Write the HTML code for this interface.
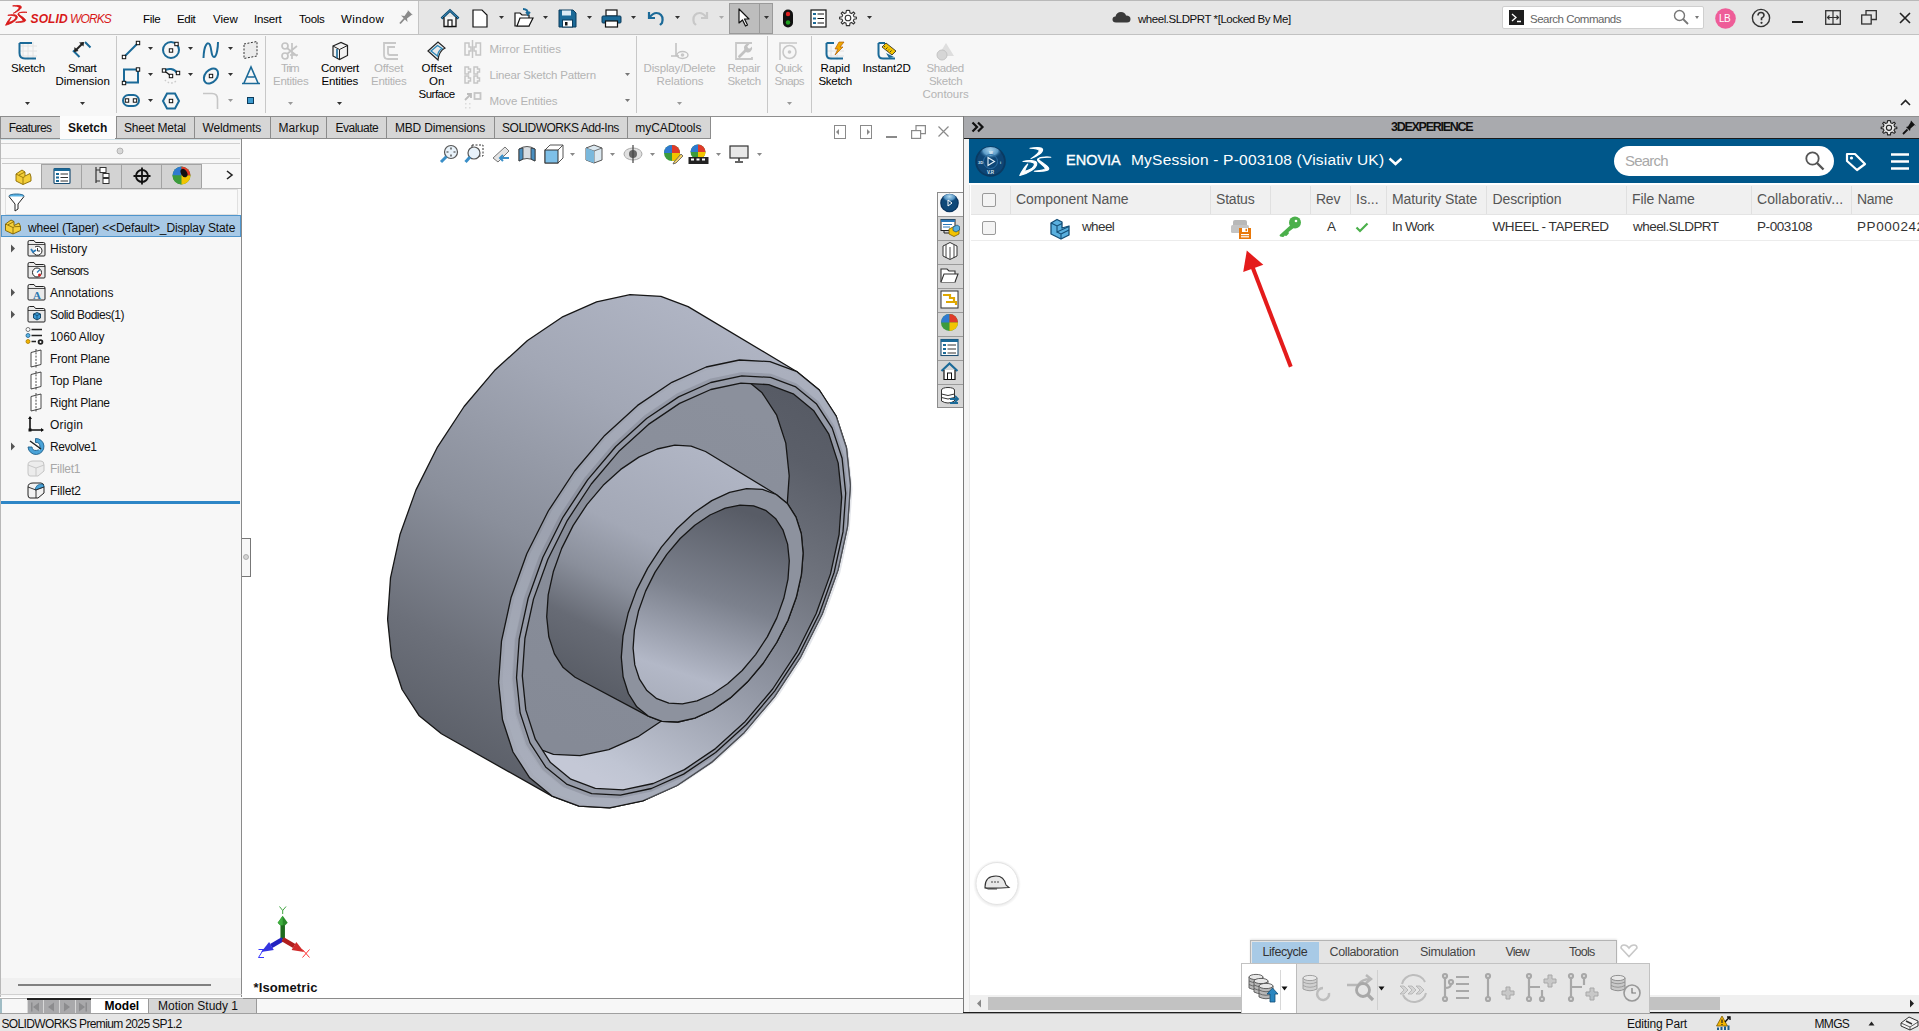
<!DOCTYPE html><html><head><meta charset='utf-8'><style>
html,body{margin:0;padding:0;width:1919px;height:1031px;overflow:hidden;background:#fff;position:relative}
.t{position:absolute;font-family:"Liberation Sans",sans-serif;line-height:1;white-space:nowrap}
.b{position:absolute;box-sizing:border-box}
svg.b{overflow:visible}
</style></head><body>
<div class='b' style='left:0px;top:0px;width:1919px;height:1px;background:#b9b9b9;'></div>
<div class='b' style='left:0px;top:1px;width:418px;height:33px;background:#f7f7f7;'></div>
<div class='b' style='left:418px;top:1px;width:1501px;height:33px;background:#e6e6e6;'></div>
<div class='b' style='left:418px;top:1px;width:1px;height:33px;background:#c4c4c4;'></div>
<div class='b' style='left:0px;top:34px;width:1919px;height:1px;background:#c2c2c2;'></div>
<svg class='b' style='left:1px;top:1px;' width='30' height='28' viewBox='0 0 30 28'><g fill='#d81a1a' stroke='#d81a1a' stroke-width='1.3' stroke-linejoin='round' transform='translate(1.3 1.2) scale(0.69 0.71)'><path d='M15 5.2 C20 4.4 27 4 27.6 6.5 C28 9.5 22 13.5 16 15.6 C21 12.5 24.5 9.5 24.2 7.5 C23.8 5.8 19 5.4 15 5.2 Z'/><path d='M8 18.5 C13 17 21.5 17 21.8 20.5 C22 25 14 30 4.8 32.5 C7 28 9.5 24 12.8 21 C11 24.5 10 26.5 9.5 28.5 C15 27 19.5 24 19.5 21 C19.5 19 13 18.3 8 18.5 Z'/><path d='M35.8 14.3 C30 13.8 23.5 14 23.5 16 C23.5 18 33.5 22.5 33.8 25.5 C34 28 27 28.8 19.3 28.2 C25 27.5 30 27 30.2 25.5 C30.5 23.5 22.5 19.5 22.5 16.8 C22.5 14.8 29 13.8 35.8 14.3 Z'/></g></svg>
<div class='t' style='left:30.50px;top:13px;font-size:12px;color:#d81919;font-weight:700;letter-spacing:0.125px;font-style:italic;'>SOLID</div>
<div class='t' style='left:70.00px;top:13px;font-size:12px;color:#d81919;letter-spacing:-0.875px;font-style:italic;'>WORKS</div>
<div class='t' style='left:143.00px;top:14px;font-size:11.5px;color:#000;letter-spacing:-0.333px;'>File</div>
<div class='t' style='left:177.00px;top:14px;font-size:11.5px;color:#000;letter-spacing:-0.333px;'>Edit</div>
<div class='t' style='left:213.00px;top:14px;font-size:11.5px;color:#000;'>View</div>
<div class='t' style='left:254.00px;top:14px;font-size:11.5px;color:#000;letter-spacing:-0.200px;'>Insert</div>
<div class='t' style='left:299.00px;top:14px;font-size:11.5px;color:#000;letter-spacing:-0.250px;'>Tools</div>
<div class='t' style='left:341.00px;top:14px;font-size:11.5px;color:#000;letter-spacing:0.400px;'>Window</div>
<svg class='b' style='left:398px;top:9px;' width='16' height='16' viewBox='0 0 16 16'><path d='M7 9 L2 14.5' stroke='#8a8a8a' stroke-width='1.8'/><path d='M3 6.5 L6.5 7 L10 2 L9.5 0.8 L15 6.2 L13.8 5.8 L9 9.5 L9.5 13 Z' fill='#8a8a8a'/></svg>
<div class='b' style='left:0px;top:35px;width:1919px;height:81px;background:#f7f7f7;'></div>
<svg class='b' style='left:18px;top:41px;' width='20' height='20' viewBox='0 0 20 20'><g stroke='#e2e2e2' stroke-width='1'><path d='M5 1V19M10 1V19M15 1V19M2 5H19M2 10H19M2 15H19'/></g><path d='M1.5 2H14 M1.5 2V12 Q1.5 17.5 7 17.5 H18' fill='none' stroke='#1b6a98' stroke-width='2'/></svg>
<div class='t' style='left:11.00px;top:63px;font-size:11.5px;color:#000;letter-spacing:-0.200px;'>Sketch</div>
<svg class='b' style='left:25.0px;top:101.5px;' width='5' height='3' viewBox='0 0 5 3'><path d='M0 0 L5 0 L2.5 3 Z' fill='#333'/></svg>
<svg class='b' style='left:72px;top:41px;' width='20' height='20' viewBox='0 0 20 20'><path d='M13 1 L18.5 6.5 M1 9.5 L7.5 16' stroke='#1b6a98' stroke-width='2' fill='none'/><path d='M3 10 L11 2' stroke='#222' stroke-width='2'/><path d='M2 11 L2.5 6 L6.5 10Z M12 1 L7 1.5 L11.5 5.5Z' fill='#222'/></svg>
<div class='t' style='left:68.00px;top:63px;font-size:11.5px;color:#000;letter-spacing:-0.500px;'>Smart</div>
<div class='t' style='left:55.50px;top:76px;font-size:11.5px;color:#000;'>Dimension</div>
<svg class='b' style='left:80.0px;top:101.5px;' width='5' height='3' viewBox='0 0 5 3'><path d='M0 0 L5 0 L2.5 3 Z' fill='#333'/></svg>
<div class='b' style='left:116px;top:36px;width:1px;height:77px;background:#c8c8c8;'></div>
<svg class='b' style='left:121px;top:40px;' width='20' height='20' viewBox='0 0 20 20'><path d='M3 17 L17 3' stroke='#1b6a98' stroke-width='2'/><rect x='1.3' y='15.3' width='3.4' height='3.4' fill='#fff' stroke='#111' stroke-width='1'/><rect x='15.3' y='1.3' width='3.4' height='3.4' fill='#fff' stroke='#111' stroke-width='1'/></svg>
<svg class='b' style='left:121px;top:66px;' width='20' height='20' viewBox='0 0 20 20'><path d='M3 3.5 H17 V16.5 H3 Z' fill='none' stroke='#1b6a98' stroke-width='2'/><rect x='1.3' y='15.3' width='3.4' height='3.4' fill='#fff' stroke='#111' stroke-width='1'/><rect x='15.3' y='1.8' width='3.4' height='3.4' fill='#fff' stroke='#111' stroke-width='1'/></svg>
<svg class='b' style='left:121px;top:92px;' width='20' height='18' viewBox='0 0 20 18'><rect x='2' y='3' width='16' height='11' rx='5.5' fill='none' stroke='#1b6a98' stroke-width='2'/><rect x='4.3' y='6.8' width='3.4' height='3.4' fill='#fff' stroke='#111' stroke-width='1'/><rect x='12.3' y='6.8' width='3.4' height='3.4' fill='#fff' stroke='#111' stroke-width='1'/></svg>
<svg class='b' style='left:161px;top:40px;' width='20' height='20' viewBox='0 0 20 20'><circle cx='10' cy='10' r='8' fill='none' stroke='#1b6a98' stroke-width='2'/><rect x='8.3' y='8.8' width='3.4' height='3.4' fill='#fff' stroke='#111' stroke-width='1'/><rect x='13.8' y='2.3' width='3.4' height='3.4' fill='#fff' stroke='#111' stroke-width='1'/></svg>
<svg class='b' style='left:161px;top:66px;' width='20' height='20' viewBox='0 0 20 20'><path d='M3 5 A8 7 0 0 1 16 7' fill='none' stroke='#1b6a98' stroke-width='2'/><path d='M4 14 A7 6 0 0 0 16 14' fill='none' stroke='#ccc' stroke-width='1.5' stroke-dasharray='1.5 2'/><path d='M3 4.5 L10 10' stroke='#111' stroke-width='1.3'/><rect x='1.3' y='2.8' width='3.4' height='3.4' fill='#fff' stroke='#111' stroke-width='1'/><rect x='8.3' y='8.3' width='3.4' height='3.4' fill='#fff' stroke='#111' stroke-width='1'/><rect x='15.3' y='5.3' width='3.4' height='3.4' fill='#fff' stroke='#111' stroke-width='1'/></svg>
<svg class='b' style='left:161px;top:92px;' width='20' height='18' viewBox='0 0 20 18'><path d='M6 1.5 H14 L18 9 L14 16.5 H6 L2 9 Z' fill='none' stroke='#1b6a98' stroke-width='2'/><rect x='8.3' y='7.3' width='3.4' height='3.4' fill='#fff' stroke='#111' stroke-width='1'/></svg>
<svg class='b' style='left:201px;top:40px;' width='20' height='20' viewBox='0 0 20 20'><path d='M2.5 18 C3 4 7 1 9 5 C11 10 10 17 13 17 C16 17 17 6 17 2' fill='none' stroke='#1b6a98' stroke-width='2'/></svg>
<svg class='b' style='left:201px;top:66px;' width='20' height='20' viewBox='0 0 20 20'><ellipse cx='10' cy='10' rx='6' ry='8.5' transform='rotate(40 10 10)' fill='none' stroke='#1b6a98' stroke-width='2'/><rect x='8.3' y='8.3' width='3.4' height='3.4' fill='#fff' stroke='#111' stroke-width='1'/></svg>
<svg class='b' style='left:201px;top:92px;' width='20' height='18' viewBox='0 0 20 18'><path d='M2 1.5 H11 Q16.5 1.5 16.5 7 V17' fill='none' stroke='#c6c6c6' stroke-width='1.6'/></svg>
<svg class='b' style='left:242px;top:40px;' width='18' height='19' viewBox='0 0 18 19'><path d='M2 4 L15 1.5 V16 L2 18.5 Z' fill='#ececec' stroke='#333' stroke-width='1' stroke-dasharray='2 1.5'/></svg>
<svg class='b' style='left:241px;top:66px;' width='20' height='19' viewBox='0 0 20 19'><path d='M1 17.5 H19 M3 17 L10 1 L17 17 M6.5 11 H13.5' fill='none' stroke='#1b6a98' stroke-width='1.6'/></svg>
<svg class='b' style='left:247px;top:97px;' width='7' height='7' viewBox='0 0 7 7'><rect x='0.5' y='0.5' width='6' height='6' fill='#3d9bd0' stroke='#0d3c5c'/></svg>
<svg class='b' style='left:148.0px;top:46.5px;' width='5' height='3' viewBox='0 0 5 3'><path d='M0 0 L5 0 L2.5 3 Z' fill='#333'/></svg>
<svg class='b' style='left:148.0px;top:72.5px;' width='5' height='3' viewBox='0 0 5 3'><path d='M0 0 L5 0 L2.5 3 Z' fill='#333'/></svg>
<svg class='b' style='left:188.0px;top:46.5px;' width='5' height='3' viewBox='0 0 5 3'><path d='M0 0 L5 0 L2.5 3 Z' fill='#333'/></svg>
<svg class='b' style='left:188.0px;top:72.5px;' width='5' height='3' viewBox='0 0 5 3'><path d='M0 0 L5 0 L2.5 3 Z' fill='#333'/></svg>
<svg class='b' style='left:228.0px;top:46.5px;' width='5' height='3' viewBox='0 0 5 3'><path d='M0 0 L5 0 L2.5 3 Z' fill='#333'/></svg>
<svg class='b' style='left:228.0px;top:72.5px;' width='5' height='3' viewBox='0 0 5 3'><path d='M0 0 L5 0 L2.5 3 Z' fill='#333'/></svg>
<svg class='b' style='left:148.0px;top:98.5px;' width='5' height='3' viewBox='0 0 5 3'><path d='M0 0 L5 0 L2.5 3 Z' fill='#333'/></svg>
<svg class='b' style='left:228.0px;top:98.5px;' width='5' height='3' viewBox='0 0 5 3'><path d='M0 0 L5 0 L2.5 3 Z' fill='#999'/></svg>
<div class='b' style='left:265px;top:36px;width:1px;height:77px;background:#c8c8c8;'></div>
<svg class='b' style='left:280px;top:41px;' width='20' height='20' viewBox='0 0 20 20'><g fill='none' stroke='#c4c4c4' stroke-width='1.7'><circle cx='5' cy='5' r='3'/><circle cx='5' cy='15' r='3'/><path d='M7 7 L17 15 M7 13 L17 5 M12 2 V18 M10 14 H18'/></g></svg>
<div class='t' style='left:281.00px;top:63px;font-size:11.5px;color:#b4b4b4;letter-spacing:-1.333px;'>Trim</div>
<div class='t' style='left:273.00px;top:76px;font-size:11.5px;color:#b4b4b4;letter-spacing:-0.286px;'>Entities</div>
<svg class='b' style='left:288.0px;top:101.5px;' width='5' height='3' viewBox='0 0 5 3'><path d='M0 0 L5 0 L2.5 3 Z' fill='#999'/></svg>
<svg class='b' style='left:331px;top:41px;' width='18' height='20' viewBox='0 0 18 20'><path d='M2 5 L10 1.5 L16.5 4.5 V14.5 L8.5 18.5 L2 15 Z' fill='#f2f2f2' stroke='#222' stroke-width='1.2'/><path d='M2 5 L8.5 8.5 L16.5 4.5 M8.5 8.5 V18.5' fill='none' stroke='#222' stroke-width='1'/><path d='M6 8 V17' stroke='#1b6a98' stroke-width='1.6'/></svg>
<div class='t' style='left:321.00px;top:63px;font-size:11.5px;color:#000;letter-spacing:-0.333px;'>Convert</div>
<div class='t' style='left:321.50px;top:76px;font-size:11.5px;color:#000;letter-spacing:-0.143px;'>Entities</div>
<svg class='b' style='left:337.0px;top:101.5px;' width='5' height='3' viewBox='0 0 5 3'><path d='M0 0 L5 0 L2.5 3 Z' fill='#333'/></svg>
<svg class='b' style='left:379px;top:41px;' width='20' height='20' viewBox='0 0 20 20'><path d='M17 2 H5 V14 Q5 18 9 18 H19 M16 6 H9 V12 Q9 14 11 14 H19' fill='none' stroke='#c8c8c8' stroke-width='1.8'/></svg>
<div class='t' style='left:374.00px;top:63px;font-size:11.5px;color:#b4b4b4;letter-spacing:-0.200px;'>Offset</div>
<div class='t' style='left:371.00px;top:76px;font-size:11.5px;color:#b4b4b4;letter-spacing:-0.286px;'>Entities</div>
<svg class='b' style='left:427px;top:41px;' width='20' height='20' viewBox='0 0 20 20'><path d='M1 10 L11 1 L18 7 Q12 10 11 19 Z' fill='#eaeaea' stroke='#222' stroke-width='1.2'/><path d='M4 10 L10.5 4.5 L15 7.5 Q11 10 10.5 15 Z' fill='none' stroke='#2a86b8' stroke-width='1.3'/></svg>
<div class='t' style='left:421.50px;top:63px;font-size:11.5px;color:#000;'>Offset</div>
<div class='t' style='left:429.00px;top:76px;font-size:11.5px;color:#000;'>On</div>
<div class='t' style='left:418.50px;top:89px;font-size:11.5px;color:#000;letter-spacing:-0.500px;'>Surface</div>
<svg class='b' style='left:464px;top:40px;' width='18' height='18' viewBox='0 0 18 18'><g fill='none' stroke='#c6c6c6' stroke-width='1.5'><path d='M8.5 0 V18'/><path d='M1 3 H5 V7 H7 V11 H5 V15 H1 Z M16.5 3 H12 V7 H10 V11 H12 V15 H16.5 Z'/></g></svg>
<div class='t' style='left:489.50px;top:44px;font-size:11.5px;color:#b4b4b4;letter-spacing:0.036px;'>Mirror Entities</div>
<svg class='b' style='left:464px;top:66px;' width='18' height='18' viewBox='0 0 18 18'><g fill='none' stroke='#c6c6c6' stroke-width='1.5'><path d='M1 1 H4.5 V3 H6.5 V6 H4.5 V8 H1 Z M10 1 H13.5 V3 H15.5 V6 H13.5 V8 H10 Z M1 10 H4.5 V12 H6.5 V15 H4.5 V17 H1 Z M10 10 H13.5 V12 H15.5 V15 H13.5 V17 H10 Z'/></g></svg>
<div class='t' style='left:489.50px;top:70px;font-size:11.5px;color:#b4b4b4;letter-spacing:-0.200px;'>Linear Sketch Pattern</div>
<svg class='b' style='left:464px;top:92px;' width='18' height='18' viewBox='0 0 18 18'><path d='M1 8 L7 2 M3 2 H7 V6' fill='none' stroke='#bdbdbd' stroke-width='1.8'/><rect x='10.5' y='1' width='6' height='6' fill='none' stroke='#c6c6c6' stroke-width='1.8'/><g fill='#dcdcdc'><rect x='1' y='11' width='1.5' height='1.5'/><rect x='5' y='11' width='1.5' height='1.5'/><rect x='1' y='15' width='1.5' height='1.5'/><rect x='5' y='15' width='1.5' height='1.5'/></g></svg>
<div class='t' style='left:489.50px;top:96px;font-size:11.5px;color:#b4b4b4;letter-spacing:-0.083px;'>Move Entities</div>
<svg class='b' style='left:625.0px;top:73.0px;' width='5' height='3' viewBox='0 0 5 3'><path d='M0 0 L5 0 L2.5 3 Z' fill='#777'/></svg>
<svg class='b' style='left:625.0px;top:99.0px;' width='5' height='3' viewBox='0 0 5 3'><path d='M0 0 L5 0 L2.5 3 Z' fill='#777'/></svg>
<div class='b' style='left:636px;top:36px;width:1px;height:77px;background:#c8c8c8;'></div>
<svg class='b' style='left:670px;top:42px;' width='19' height='18' viewBox='0 0 19 18'><path d='M6 1 V14 M1 14 H9' stroke='#c2c2c2' stroke-width='1.6' fill='none'/><ellipse cx='12.5' cy='13' rx='5.5' ry='3.5' fill='none' stroke='#c2c2c2' stroke-width='1.4'/><circle cx='12.5' cy='13' r='1.8' fill='#c8c8c8'/></svg>
<div class='t' style='left:643.50px;top:63px;font-size:11.5px;color:#b4b4b4;letter-spacing:-0.154px;'>Display/Delete</div>
<div class='t' style='left:656.50px;top:76px;font-size:11.5px;color:#b4b4b4;letter-spacing:-0.125px;'>Relations</div>
<svg class='b' style='left:677.0px;top:101.5px;' width='5' height='3' viewBox='0 0 5 3'><path d='M0 0 L5 0 L2.5 3 Z' fill='#999'/></svg>
<svg class='b' style='left:735px;top:42px;' width='18' height='18' viewBox='0 0 18 18'><path d='M17 1 H1 V17 H17 V15' fill='none' stroke='#c8c8c8' stroke-width='1.8'/><path d='M4.5 14.5 L10.5 8.5' stroke='#c2c2c2' stroke-width='2.8' stroke-linecap='round'/><path d='M9.2 7.5 A4.2 4.2 0 0 1 14.5 2 L12.3 4.6 L13.2 6.2 L15 6.6 L16.8 4.6 A4.2 4.2 0 0 1 11 10 Z' fill='#c2c2c2'/></svg>
<div class='t' style='left:727.50px;top:63px;font-size:11.5px;color:#b4b4b4;letter-spacing:-0.200px;'>Repair</div>
<div class='t' style='left:727.50px;top:76px;font-size:11.5px;color:#b4b4b4;letter-spacing:-0.300px;'>Sketch</div>
<div class='b' style='left:767px;top:36px;width:1px;height:77px;background:#c8c8c8;'></div>
<svg class='b' style='left:779px;top:42px;' width='19' height='18' viewBox='0 0 19 18'><path d='M1 18 V1 H18' fill='none' stroke='#c8c8c8' stroke-width='1.6'/><circle cx='10.5' cy='10' r='6.5' fill='none' stroke='#c8c8c8' stroke-width='1.6'/><circle cx='10.5' cy='10' r='1.8' fill='#c8c8c8'/></svg>
<div class='t' style='left:775.00px;top:63px;font-size:11.5px;color:#b4b4b4;letter-spacing:-0.500px;'>Quick</div>
<div class='t' style='left:774.50px;top:76px;font-size:11.5px;color:#b4b4b4;letter-spacing:-0.625px;'>Snaps</div>
<svg class='b' style='left:787.0px;top:101.5px;' width='5' height='3' viewBox='0 0 5 3'><path d='M0 0 L5 0 L2.5 3 Z' fill='#999'/></svg>
<div class='b' style='left:811px;top:36px;width:1px;height:77px;background:#c8c8c8;'></div>
<svg class='b' style='left:825px;top:41px;' width='20' height='20' viewBox='0 0 20 20'><g stroke='#e0e0e0' stroke-width='1'><path d='M6 5V19M12 5V19M2 10H19M2 15H19'/></g><path d='M1.5 2H9 M1.5 2V13 Q1.5 17.5 6 17.5 H18' fill='none' stroke='#1b6a98' stroke-width='2'/><path d='M14 1 L19 1 L15 6 L18 6 L10 14 L13 8 L10 8 Z' fill='#f0a800' stroke='#b35c00' stroke-width='0.7'/></svg>
<div class='t' style='left:820.50px;top:63px;font-size:11.5px;color:#000;letter-spacing:-0.125px;'>Rapid</div>
<div class='t' style='left:818.50px;top:76px;font-size:11.5px;color:#000;letter-spacing:-0.300px;'>Sketch</div>
<svg class='b' style='left:877px;top:41px;' width='20' height='20' viewBox='0 0 20 20'><path d='M1.5 2H8 M1.5 2V13 Q1.5 17.5 6 17.5 H18' fill='none' stroke='#1b6a98' stroke-width='2'/><path d='M5 6 L9 2 L19 10 L15 14 Z' fill='#f3c300' stroke='#222' stroke-width='0.8'/><path d='M7 6L8 5M9 8L10.5 6.5M11 9.5L12 8.5M13 11L14.5 9.5' stroke='#222' stroke-width='0.8'/><path d='M9 12 L17 16 L12 17Z' fill='#1b6a98'/></svg>
<div class='t' style='left:862.50px;top:63px;font-size:11.5px;color:#000;letter-spacing:-0.125px;'>Instant2D</div>
<svg class='b' style='left:936px;top:42px;' width='20' height='18' viewBox='0 0 20 18'><path d='M10 1 L18 14 H2 Z' fill='#dedede'/><circle cx='6' cy='13' r='5' fill='#d6d6d6' stroke='#c4c4c4'/></svg>
<div class='t' style='left:926.50px;top:63px;font-size:11.5px;color:#b4b4b4;letter-spacing:-0.400px;'>Shaded</div>
<div class='t' style='left:929.00px;top:76px;font-size:11.5px;color:#b4b4b4;letter-spacing:-0.300px;'>Sketch</div>
<div class='t' style='left:922.50px;top:89px;font-size:11.5px;color:#b4b4b4;letter-spacing:-0.071px;'>Contours</div>
<svg class='b' style='left:1900px;top:99px;' width='11' height='7' viewBox='0 0 11 7'><path d='M1 6 L5.5 1.5 L10 6' fill='none' stroke='#222' stroke-width='1.6'/></svg>
<svg class='b' style='left:440px;top:9px;' width='20' height='19' viewBox='0 0 20 19'><path d='M1.5 9.5 L10 1.5 L18.5 9.5' fill='none' stroke='#0d4a6e' stroke-width='2.6'/><path d='M1.5 9.5 L10 1.5 L18.5 9.5' fill='none' stroke='#3f8fc0' stroke-width='1'/><path d='M4 8 V17.5 H16 V8' fill='#f5f5f5' stroke='#111' stroke-width='1.3'/><rect x='8' y='11' width='4' height='6.5' fill='#fff' stroke='#111' stroke-width='1.2'/></svg>
<svg class='b' style='left:472px;top:9px;' width='16' height='19' viewBox='0 0 16 19'><path d='M1 1 H10 L15 6 V18 H1 Z' fill='#fff' stroke='#111' stroke-width='1.2'/></svg>
<svg class='b' style='left:499.0px;top:16.0px;' width='5' height='3' viewBox='0 0 5 3'><path d='M0 0 L5 0 L2.5 3 Z' fill='#333'/></svg>
<svg class='b' style='left:514px;top:8px;' width='20' height='20' viewBox='0 0 20 20'><path d='M1 5 H6 L8 7 H15 V18 H1 Z' fill='#fff' stroke='#111' stroke-width='1.2'/><path d='M3 18 L6 10 H19 L15 18 Z' fill='#fff' stroke='#111' stroke-width='1.2'/><path d='M9 1 Q14 1 14 6 L16 4 M14 6 L12 4' fill='none' stroke='#1b6a98' stroke-width='2'/></svg>
<svg class='b' style='left:543.0px;top:16.0px;' width='5' height='3' viewBox='0 0 5 3'><path d='M0 0 L5 0 L2.5 3 Z' fill='#333'/></svg>
<svg class='b' style='left:558px;top:9px;' width='19' height='19' viewBox='0 0 19 19'><path d='M1 1 H15 L18 4 V18 H1 Z' fill='#1b6a98' stroke='#0d3c5c' stroke-width='1'/><rect x='4' y='1.5' width='9' height='5' fill='#dcecf6'/><rect x='4.5' y='11' width='10' height='7' fill='#fff' stroke='#0d3c5c' stroke-width='1'/><rect x='7' y='13' width='2.5' height='3.5' fill='#111'/></svg>
<svg class='b' style='left:587.0px;top:16.0px;' width='5' height='3' viewBox='0 0 5 3'><path d='M0 0 L5 0 L2.5 3 Z' fill='#333'/></svg>
<svg class='b' style='left:601px;top:9px;' width='21' height='19' viewBox='0 0 21 19'><rect x='5' y='1' width='11' height='6' fill='#fff' stroke='#111' stroke-width='1.2'/><rect x='1' y='7' width='19' height='7' rx='1' fill='#1b6a98' stroke='#0d3c5c'/><rect x='4.5' y='12' width='12' height='6' fill='#fff' stroke='#111' stroke-width='1.2'/></svg>
<svg class='b' style='left:631.0px;top:16.0px;' width='5' height='3' viewBox='0 0 5 3'><path d='M0 0 L5 0 L2.5 3 Z' fill='#333'/></svg>
<svg class='b' style='left:646px;top:9px;' width='19' height='17' viewBox='0 0 19 17'><path d='M3 3 V9 H9' fill='none' stroke='#1b6a98' stroke-width='2.2'/><path d='M3.5 8.5 Q8 2.5 13 4.5 Q18 7 16 14 L14 16' fill='none' stroke='#1b6a98' stroke-width='2.2'/></svg>
<svg class='b' style='left:675.0px;top:16.0px;' width='5' height='3' viewBox='0 0 5 3'><path d='M0 0 L5 0 L2.5 3 Z' fill='#333'/></svg>
<svg class='b' style='left:691px;top:9px;' width='19' height='17' viewBox='0 0 19 17'><path d='M16 3 V9 H10' fill='none' stroke='#c8c8c8' stroke-width='2.2'/><path d='M15.5 8.5 Q11 2.5 6 4.5 Q1 7 3 14 L5 16' fill='none' stroke='#c8c8c8' stroke-width='2.2'/></svg>
<svg class='b' style='left:719.0px;top:16.0px;' width='5' height='3' viewBox='0 0 5 3'><path d='M0 0 L5 0 L2.5 3 Z' fill='#aaa'/></svg>
<div class='b' style='left:729px;top:3px;width:44px;height:31px;background:#bdbdbd;border:1px solid #9a9a9a;'></div>
<div class='b' style='left:759px;top:4px;width:1px;height:29px;background:#9a9a9a;'></div>
<svg class='b' style='left:737px;top:8px;' width='14' height='19' viewBox='0 0 14 19'><path d='M2 1 V15 L5.5 12 L8.5 18 L10.5 17 L7.5 11 L12 11 Z' fill='#fff' stroke='#111' stroke-width='1.2' stroke-linejoin='round'/></svg>
<svg class='b' style='left:763.5px;top:16.0px;' width='5' height='3' viewBox='0 0 5 3'><path d='M0 0 L5 0 L2.5 3 Z' fill='#333'/></svg>
<svg class='b' style='left:782px;top:9px;' width='12' height='19' viewBox='0 0 12 19'><rect x='1' y='0.5' width='10' height='18' rx='5' fill='#111'/><circle cx='6' cy='5' r='2.2' fill='#e02020'/><circle cx='6' cy='13.5' r='2.2' fill='#20a020'/></svg>
<svg class='b' style='left:810px;top:9px;' width='17' height='19' viewBox='0 0 17 19'><rect x='1' y='1' width='15' height='17' fill='#fff' stroke='#111' stroke-width='1.2'/><g fill='#1b6a98'><rect x='3' y='4' width='3' height='2'/><rect x='3' y='8.5' width='3' height='2'/><rect x='3' y='13' width='3' height='2'/></g><path d='M7.5 5H14M7.5 9.5H14M7.5 14H14' stroke='#111' stroke-width='1.2'/></svg>
<svg class='b' style='left:839px;top:9px;' width='18' height='18' viewBox='0 0 18 18'><path d='M9 1.2 L10.6 1.4 L11 3.8 L12.6 4.5 L14.5 3 L15.8 4.3 L14.3 6.2 L15 7.8 L17.4 8.2 V9.8 L15 10.2 L14.3 11.8 L15.8 13.7 L14.5 15 L12.6 13.5 L11 14.2 L10.6 16.6 H7.4 L7 14.2 L5.4 13.5 L3.5 15 L2.2 13.7 L3.7 11.8 L3 10.2 L0.6 9.8 V8.2 L3 7.8 L3.7 6.2 L2.2 4.3 L3.5 3 L5.4 4.5 L7 3.8 L7.4 1.4 Z' fill='#fff' stroke='#333' stroke-width='1.1'/><circle cx='9' cy='9' r='2.8' fill='none' stroke='#333' stroke-width='1.1'/></svg>
<svg class='b' style='left:866.5px;top:16.0px;' width='5' height='3' viewBox='0 0 5 3'><path d='M0 0 L5 0 L2.5 3 Z' fill='#333'/></svg>
<svg class='b' style='left:1112px;top:11px;' width='19' height='12' viewBox='0 0 19 12'><path d='M4 11.5 Q0.5 11.5 0.5 8.5 Q0.5 5.5 3.5 5.5 Q4.5 1 9 1 Q13 1 14 4.5 Q18.5 4.5 18.5 8 Q18.5 11.5 15 11.5 Z' fill='#3a3a3a'/></svg>
<div class='t' style='left:1138.00px;top:14px;font-size:11.5px;color:#111;letter-spacing:-0.444px;'>wheel.SLDPRT *[Locked By Me]</div>
<div class='b' style='left:1502px;top:6px;width:202px;height:23px;background:#fff;border:1px solid #cfcfcf;border-radius:2px;'></div>
<svg class='b' style='left:1509px;top:10px;' width='15' height='15' viewBox='0 0 15 15'><rect x='0' y='0' width='15' height='15' fill='#1e1e1e'/><path d='M3 4 L7 7.5 L3 11 M8 11.5 H12' fill='none' stroke='#fff' stroke-width='1.3'/></svg>
<div class='t' style='left:1530.00px;top:13.5px;font-size:11.5px;color:#666;letter-spacing:-0.500px;'>Search Commands</div>
<svg class='b' style='left:1673px;top:9px;' width='16' height='16' viewBox='0 0 16 16'><circle cx='6.5' cy='6.5' r='5' fill='none' stroke='#777' stroke-width='1.4'/><path d='M10 10 L15 15' stroke='#777' stroke-width='1.8'/></svg>
<svg class='b' style='left:1695.0px;top:16.0px;' width='4' height='3' viewBox='0 0 4 3'><path d='M0 0 L4 0 L2.0 3 Z' fill='#777'/></svg>
<svg class='b' style='left:1715px;top:8px;' width='21' height='21' viewBox='0 0 21 21'><circle cx='10.5' cy='10.5' r='10.3' fill='#ee5d98'/></svg>
<div class='t' style='left:1719.00px;top:14px;font-size:10px;color:#fff;letter-spacing:-0.500px;'>LB</div>
<svg class='b' style='left:1751px;top:8px;' width='20' height='20' viewBox='0 0 20 20'><circle cx='10' cy='10' r='8.6' fill='none' stroke='#333' stroke-width='1.4'/><path d='M7 7.5 Q7 4.5 10 4.5 Q13 4.5 13 7.3 Q13 9 10.5 10.2 V12.2' fill='none' stroke='#333' stroke-width='1.6'/><circle cx='10.5' cy='14.8' r='1.1' fill='#333'/></svg>
<div class='b' style='left:1792px;top:21px;width:11px;height:2px;background:#222;'></div>
<svg class='b' style='left:1825px;top:10px;' width='16' height='15' viewBox='0 0 16 15'><rect x='0.7' y='0.7' width='14.6' height='13.6' fill='none' stroke='#333' stroke-width='1.3'/><path d='M8 1V14 M2.5 7.5H13.5 M4.5 5.5 L2.5 7.5 L4.5 9.5 M11.5 5.5 L13.5 7.5 L11.5 9.5' fill='none' stroke='#333' stroke-width='1.2'/></svg>
<svg class='b' style='left:1861px;top:10px;' width='16' height='15' viewBox='0 0 16 15'><rect x='0.7' y='5' width='9.5' height='9' fill='none' stroke='#333' stroke-width='1.3'/><path d='M5 5 V0.7 H15.3 V9.5 H10.2' fill='none' stroke='#333' stroke-width='1.3'/></svg>
<svg class='b' style='left:1899px;top:12px;' width='12' height='12' viewBox='0 0 12 12'><path d='M1 1 L11 11 M11 1 L1 11' stroke='#222' stroke-width='1.6'/></svg>
<div class='b' style='left:0px;top:116px;width:1919px;height:1px;background:#8f8f8f;'></div>
<div class='b' style='left:0px;top:117px;width:963px;height:22px;background:#ffffff;'></div>
<div class='b' style='left:0px;top:116px;width:61px;height:23px;background:#d6d6d6;border:1px solid #8c8c8c;'></div>
<div class='t' style='left:8.70px;top:122px;font-size:12px;color:#111;letter-spacing:-0.571px;'>Features</div>
<div class='b' style='left:60px;top:116px;width:56px;height:23px;background:#fcfcfc;'></div>
<div class='t' style='left:68.00px;top:122px;font-size:12px;color:#111;font-weight:700;'>Sketch</div>
<div class='b' style='left:116px;top:116px;width:79px;height:23px;background:#d6d6d6;border:1px solid #8c8c8c;'></div>
<div class='t' style='left:124.00px;top:122px;font-size:12px;color:#111;letter-spacing:-0.200px;'>Sheet Metal</div>
<div class='b' style='left:194px;top:116px;width:77px;height:23px;background:#d6d6d6;border:1px solid #8c8c8c;'></div>
<div class='t' style='left:202.50px;top:122px;font-size:12px;color:#111;letter-spacing:-0.125px;'>Weldments</div>
<div class='b' style='left:270px;top:116px;width:57px;height:23px;background:#d6d6d6;border:1px solid #8c8c8c;'></div>
<div class='t' style='left:278.50px;top:122px;font-size:12px;color:#111;letter-spacing:0.100px;'>Markup</div>
<div class='b' style='left:326px;top:116px;width:61px;height:23px;background:#d6d6d6;border:1px solid #8c8c8c;'></div>
<div class='t' style='left:335.50px;top:122px;font-size:12px;color:#111;letter-spacing:-0.500px;'>Evaluate</div>
<div class='b' style='left:386px;top:116px;width:109px;height:23px;background:#d6d6d6;border:1px solid #8c8c8c;'></div>
<div class='t' style='left:395.00px;top:122px;font-size:12px;color:#111;letter-spacing:-0.192px;'>MBD Dimensions</div>
<div class='b' style='left:494px;top:116px;width:134px;height:23px;background:#d6d6d6;border:1px solid #8c8c8c;'></div>
<div class='t' style='left:502.00px;top:122px;font-size:12px;color:#111;letter-spacing:-0.471px;'>SOLIDWORKS Add-Ins</div>
<div class='b' style='left:627px;top:116px;width:84px;height:23px;background:#d6d6d6;border:1px solid #8c8c8c;'></div>
<div class='t' style='left:635.30px;top:122px;font-size:12px;color:#111;letter-spacing:-0.056px;'>myCADtools</div>
<div class='b' style='left:0px;top:138px;width:60px;height:1px;background:#8c8c8c;'></div>
<div class='b' style='left:115px;top:138px;width:595px;height:1px;background:#8c8c8c;'></div>
<svg class='b' style='left:834px;top:125px;' width='12' height='14' viewBox='0 0 12 14'><rect x='0.5' y='0.5' width='11' height='13' fill='none' stroke='#8a8a8a'/><path d='M5 4 L2 7 L5 10Z' fill='#8a8a8a'/></svg>
<svg class='b' style='left:860px;top:125px;' width='12' height='14' viewBox='0 0 12 14'><rect x='0.5' y='0.5' width='11' height='13' fill='none' stroke='#8a8a8a'/><path d='M7 4 L10 7 L7 10Z' fill='#8a8a8a'/></svg>
<div class='b' style='left:886px;top:136px;width:11px;height:2px;background:#8a8a8a;'></div>
<svg class='b' style='left:911px;top:125px;' width='15' height='14' viewBox='0 0 15 14'><rect x='0.6' y='5.6' width='9' height='7.8' fill='none' stroke='#8a8a8a' stroke-width='1.2'/><path d='M5 5.6 V0.6 H14.4 V8.6 H9.6' fill='none' stroke='#8a8a8a' stroke-width='1.2'/></svg>
<svg class='b' style='left:938px;top:126px;' width='11' height='11' viewBox='0 0 11 11'><path d='M0.5 0.5 L10.5 10.5 M10.5 0.5 L0.5 10.5' stroke='#8a8a8a' stroke-width='1.2'/></svg>
<div class='b' style='left:0px;top:139px;width:242px;height:858px;background:#f7f7f7;'></div>
<div class='b' style='left:0px;top:139px;width:1px;height:858px;background:#b8b8b8;'></div>
<div class='b' style='left:241px;top:139px;width:1px;height:858px;background:#8a8a8a;'></div>
<div class='b' style='left:1px;top:139px;width:240px;height:1px;background:#cfe0e6;'></div>
<div class='b' style='left:1px;top:143px;width:239px;height:1px;background:#d0d0d0;'></div>
<svg class='b' style='left:116px;top:147px;' width='8' height='8' viewBox='0 0 8 8'><circle cx='4' cy='4' r='3' fill='#d8d8d8' stroke='#a8a8a8' stroke-width='0.8'/></svg>
<div class='b' style='left:1px;top:158px;width:239px;height:1px;background:#d4d4d4;'></div>
<div class='b' style='left:2px;top:163px;width:239px;height:1px;background:#c8c8c8;'></div>
<div class='b' style='left:41px;top:164px;width:41px;height:25px;background:#d3d3d3;border:1px solid #a3a3a3;border-bottom:none;'></div>
<div class='b' style='left:81px;top:164px;width:41px;height:25px;background:#d3d3d3;border:1px solid #a3a3a3;border-bottom:none;'></div>
<div class='b' style='left:121px;top:164px;width:41px;height:25px;background:#d3d3d3;border:1px solid #a3a3a3;border-bottom:none;'></div>
<div class='b' style='left:161px;top:164px;width:41px;height:25px;background:#d3d3d3;border:1px solid #a3a3a3;border-bottom:none;'></div>
<div class='b' style='left:1px;top:188px;width:40px;height:1px;background:#bdbdbd;'></div>
<div class='b' style='left:201px;top:188px;width:40px;height:1px;background:#bdbdbd;'></div>
<div class='b' style='left:41px;top:188px;width:160px;height:1px;background:#a3a3a3;'></div>
<svg class='b' style='left:14px;top:167px;' width='18' height='18' viewBox='0 0 18 18'><path d='M2 7 L8 3 L11 5 V9 L16 6.5 L17 10 V14 L9 17.5 L2 14 Z' fill='#f4cf3a' stroke='#8a6a00' stroke-width='0.9'/><path d='M2 7 L9 10.5 L9 17.5 M9 10.5 L11 9.5 M11 5 L5 8' fill='none' stroke='#8a6a00' stroke-width='0.8'/></svg>
<svg class='b' style='left:53px;top:167px;' width='18' height='18' viewBox='0 0 18 18'><rect x='1' y='1.5' width='16' height='15' rx='1' fill='#fff' stroke='#1d4f74' stroke-width='1.2'/><rect x='1' y='1.5' width='16' height='2.5' fill='#1b6a98'/><g fill='#1b6a98'><rect x='3' y='6' width='3' height='2'/><rect x='3' y='9.5' width='3' height='2'/><rect x='3' y='13' width='3' height='2'/></g><path d='M7.5 7H15M7.5 10.5H15M7.5 14H15' stroke='#333' stroke-width='1'/></svg>
<svg class='b' style='left:94px;top:166px;' width='16' height='19' viewBox='0 0 16 19'><path d='M2 1 V17 M2 4 H6 M2 15 H6' stroke='#333' stroke-width='1.2' fill='none'/><rect x='6' y='1.5' width='6' height='5' fill='#fff' stroke='#333'/><rect x='9' y='7.5' width='6' height='4' fill='#fff' stroke='#333'/><rect x='9' y='12.5' width='6' height='5' fill='#fff' stroke='#333'/></svg>
<svg class='b' style='left:133px;top:167px;' width='18' height='18' viewBox='0 0 18 18'><circle cx='9' cy='9' r='6' fill='none' stroke='#111' stroke-width='1.8'/><path d='M9 0.5 V17.5 M0.5 9 H17.5' stroke='#111' stroke-width='1.8'/></svg>
<svg class='b' style='left:172px;top:166px;' width='19' height='19' viewBox='0 0 19 19'><circle cx='9.5' cy='9.5' r='9' fill='#3c9b3c'/><path d='M9.5 0.5 A9 9 0 0 0 0.5 9.5 H9.5Z' fill='#2f7ad0'/><path d='M9.5 0.5 A9 9 0 0 1 18.5 9.5 H9.5Z' fill='#e03a2a'/><path d='M0.5 9.5 A9 9 0 0 0 9.5 18.5 V9.5Z' fill='#3c9b3c'/><path d='M18.5 9.5 A9 9 0 0 1 9.5 18.5 V9.5Z' fill='#f2c400'/><ellipse cx='12' cy='7' rx='3' ry='4.5' transform='rotate(-30 12 7)' fill='#111'/></svg>
<svg class='b' style='left:226px;top:170px;' width='7' height='10' viewBox='0 0 7 10'><path d='M1 1 L6 5 L1 9' fill='none' stroke='#222' stroke-width='1.6'/></svg>
<div class='b' style='left:5px;top:189px;width:233px;height:26px;background:#f9f9f9;border:1px solid #e0e0e0;'></div>
<svg class='b' style='left:8px;top:193px;' width='17' height='19' viewBox='0 0 17 19'><ellipse cx='8.5' cy='3' rx='7.5' ry='2' fill='#5ab4e6' stroke='#1d5f8a' stroke-width='0.9'/><path d='M1 3.5 L7 11 V18 L10 16 V11 L16 3.5' fill='#fff' stroke='#222' stroke-width='1'/></svg>
<div class='b' style='left:1px;top:215px;width:240px;height:22px;background:#a8c9e6;border:1px solid #4f95cc;'></div>
<svg class='b' style='left:4px;top:217px;' width='18' height='18' viewBox='0 0 18 18'><path d='M1.5 7 L7 3 L10 4.5 V8.5 L15 6 L16.5 9.5 V13.5 L9 17 L1.5 13.5 Z' fill='#f4cf3a' stroke='#7a5e00' stroke-width='0.9'/><path d='M1.5 7 L9 10.5 V17 M9 10.5 L10.5 9.7 M10 4.5 L4 7.8 M10.5 9.7 L16.5 9.5' fill='none' stroke='#7a5e00' stroke-width='0.8'/></svg>
<div class='t' style='left:28.00px;top:222px;font-size:12px;color:#111;letter-spacing:-0.135px;'>wheel (Taper) &lt;&lt;Default&gt;_Display State</div>
<div class='t' style='left:50.00px;top:243px;font-size:12px;color:#111;'>History</div>
<svg class='b' style='left:10px;top:244px;' width='6' height='9' viewBox='0 0 6 9'><path d='M1 0.5 L5 4.5 L1 8.5 Z' fill='#555'/></svg>
<div class='t' style='left:50.00px;top:265px;font-size:12px;color:#111;letter-spacing:-0.833px;'>Sensors</div>
<div class='t' style='left:50.00px;top:287px;font-size:12px;color:#111;'>Annotations</div>
<svg class='b' style='left:10px;top:288px;' width='6' height='9' viewBox='0 0 6 9'><path d='M1 0.5 L5 4.5 L1 8.5 Z' fill='#555'/></svg>
<div class='t' style='left:50.00px;top:309px;font-size:12px;color:#111;letter-spacing:-0.500px;'>Solid Bodies(1)</div>
<svg class='b' style='left:10px;top:310px;' width='6' height='9' viewBox='0 0 6 9'><path d='M1 0.5 L5 4.5 L1 8.5 Z' fill='#555'/></svg>
<div class='t' style='left:50.00px;top:331px;font-size:12px;color:#111;letter-spacing:-0.111px;'>1060 Alloy</div>
<div class='t' style='left:50.00px;top:353px;font-size:12px;color:#111;letter-spacing:-0.200px;'>Front Plane</div>
<div class='t' style='left:50.00px;top:375px;font-size:12px;color:#111;letter-spacing:-0.125px;'>Top Plane</div>
<div class='t' style='left:50.00px;top:397px;font-size:12px;color:#111;letter-spacing:-0.200px;'>Right Plane</div>
<div class='t' style='left:50.00px;top:419px;font-size:12px;color:#111;letter-spacing:0.200px;'>Origin</div>
<div class='t' style='left:50.00px;top:441px;font-size:12px;color:#111;letter-spacing:-0.429px;'>Revolve1</div>
<svg class='b' style='left:10px;top:442px;' width='6' height='9' viewBox='0 0 6 9'><path d='M1 0.5 L5 4.5 L1 8.5 Z' fill='#555'/></svg>
<div class='t' style='left:50.00px;top:463px;font-size:12px;color:#a8a8a8;letter-spacing:-0.250px;'>Fillet1</div>
<div class='t' style='left:50.00px;top:485px;font-size:12px;color:#111;letter-spacing:-0.167px;'>Fillet2</div>
<svg class='b' style='left:27px;top:239px;' width='19' height='18' viewBox='0 0 19 18'><path d='M1 3 Q1 1.5 2.5 1.5 H7 L8.5 3.5 H16.5 Q18 3.5 18 5 V16 Q18 17 17 17 H2 Q1 17 1 16 Z' fill='#eaeaea' stroke='#222' stroke-width='1'/><path d='M1 5.5 H18' stroke='#222' stroke-width='0.8'/><path d='M6 12 A4.5 4.5 0 1 0 8 8' fill='#fff' stroke='#222' stroke-width='1'/><path d='M4 10 L6 13 L9 11' fill='none' stroke='#2a7ab8' stroke-width='1.8'/><path d='M10.5 9 V12 H13' stroke='#222' stroke-width='0.9' fill='none'/></svg>
<svg class='b' style='left:27px;top:261px;' width='19' height='18' viewBox='0 0 19 18'><path d='M1 3 Q1 1.5 2.5 1.5 H7 L8.5 3.5 H16.5 Q18 3.5 18 5 V16 Q18 17 17 17 H2 Q1 17 1 16 Z' fill='#eaeaea' stroke='#222' stroke-width='1'/><path d='M1 5.5 H18' stroke='#222' stroke-width='0.8'/><circle cx='10' cy='11.5' r='4.5' fill='#fff' stroke='#222' stroke-width='1'/><path d='M10 11.5 L13 8.5' stroke='#2a7ab8' stroke-width='1.3'/><circle cx='12.5' cy='14' r='1.5' fill='#e02020'/></svg>
<svg class='b' style='left:27px;top:283px;' width='19' height='18' viewBox='0 0 19 18'><path d='M1 3 Q1 1.5 2.5 1.5 H7 L8.5 3.5 H16.5 Q18 3.5 18 5 V16 Q18 17 17 17 H2 Q1 17 1 16 Z' fill='#eaeaea' stroke='#222' stroke-width='1'/><path d='M1 5.5 H18' stroke='#222' stroke-width='0.8'/><text x='10' y='16' font-family='Liberation Serif' font-size='11' font-weight='700' fill='#2a78b0' text-anchor='middle'>A</text></svg>
<svg class='b' style='left:27px;top:305px;' width='19' height='18' viewBox='0 0 19 18'><path d='M1 3 Q1 1.5 2.5 1.5 H7 L8.5 3.5 H16.5 Q18 3.5 18 5 V16 Q18 17 17 17 H2 Q1 17 1 16 Z' fill='#eaeaea' stroke='#222' stroke-width='1'/><path d='M1 5.5 H18' stroke='#222' stroke-width='0.8'/><path d='M6.5 9 L10 7.5 L13.5 9 V13 L10 15 L6.5 13 Z' fill='#3a9ad6' stroke='#0d3c5c' stroke-width='0.9'/><path d='M6.5 9 L10 10.5 L13.5 9 M10 10.5 V15' fill='none' stroke='#0d3c5c' stroke-width='0.7'/></svg>
<svg class='b' style='left:25px;top:327px;' width='20' height='18' viewBox='0 0 20 18'><circle cx='3' cy='2.5' r='2' fill='#fff' stroke='#555' stroke-width='0.8'/><circle cx='3' cy='8.5' r='2' fill='#5ab4e6' stroke='#1d5f8a' stroke-width='0.8'/><circle cx='3' cy='14.5' r='2' fill='#f2b400' stroke='#a87a00' stroke-width='0.8'/><path d='M6.5 2.5 H17 M6.5 8.5 H17 M6.5 14.5 H11' stroke='#222' stroke-width='1.5'/><circle cx='15.5' cy='15' r='2.8' fill='#222'/><circle cx='15.5' cy='15' r='1' fill='#fff'/></svg>
<svg class='b' style='left:29px;top:349px;' width='14' height='19' viewBox='0 0 14 19'><path d='M2 3.5 L12 1 V15.5 L2 18 Z' fill='#fff' stroke='#333' stroke-width='0.9'/><path d='M7 0 V19' stroke='#333' stroke-width='0.9' stroke-dasharray='2 1.3'/></svg>
<svg class='b' style='left:29px;top:371px;' width='14' height='19' viewBox='0 0 14 19'><path d='M2 3.5 L12 1 V15.5 L2 18 Z' fill='#fff' stroke='#333' stroke-width='0.9'/><path d='M7 0 V19' stroke='#333' stroke-width='0.9' stroke-dasharray='2 1.3'/></svg>
<svg class='b' style='left:29px;top:393px;' width='14' height='19' viewBox='0 0 14 19'><path d='M2 3.5 L12 1 V15.5 L2 18 Z' fill='#fff' stroke='#333' stroke-width='0.9'/><path d='M7 0 V19' stroke='#333' stroke-width='0.9' stroke-dasharray='2 1.3'/></svg>
<svg class='b' style='left:27px;top:415px;' width='18' height='18' viewBox='0 0 18 18'><path d='M3 2 V15 H16' fill='none' stroke='#111' stroke-width='1.6'/><path d='M1 4 L3 1 L5 4 Z M14 13 L17 15 L14 17 Z' fill='#111'/><rect x='1.5' y='13.5' width='3' height='3' fill='#111'/></svg>
<svg class='b' style='left:26px;top:437px;' width='19' height='19' viewBox='0 0 19 19'><path d='M9.5 1.5 A8 8 0 1 1 2 10 L6 10 A4 4 0 1 0 9.5 5.5 Z' fill='#4aa3d8' stroke='#1d5f8a' stroke-width='0.9'/><path d='M4 4 L15 12' stroke='#222' stroke-width='1.5'/><path d='M4 6 L14 13' stroke='#fff' stroke-width='0.8'/></svg>
<svg class='b' style='left:26px;top:459px;' width='19' height='18' viewBox='0 0 19 18'><path d='M2 6 Q2 2 7 2 H15 Q18 2 18 6 V12 L12 17 H4 Q2 17 2 14 Z' fill='#ececec' stroke='#c4c4c4' stroke-width='1'/><path d='M2 6 L10 9 L18 6 M10 9 V17' fill='none' stroke='#c8c8c8'/></svg>
<svg class='b' style='left:26px;top:481px;' width='19' height='18' viewBox='0 0 19 18'><path d='M2 6 Q2 2 7 2 H15 Q18 2 18 6 V12 L12 17 H4 Q2 17 2 14 Z' fill='#f2f2f2' stroke='#222' stroke-width='1'/><path d='M9 9 Q10 3 16 3 Q18 4 18 6 Z' fill='#4aa3d8' stroke='#1d5f8a' stroke-width='0.8'/><path d='M2 6 L10 9 L18 6 M10 9 V17' fill='none' stroke='#222' stroke-width='0.9'/></svg>
<div class='b' style='left:1px;top:501px;width:239px;height:3px;background:#2e86c6;'></div>
<div class='b' style='left:1px;top:978px;width:240px;height:16px;background:#f0f0f0;'></div>
<div class='b' style='left:18px;top:984px;width:193px;height:2px;background:#808080;'></div>
<div class='b' style='left:0px;top:994px;width:242px;height:1px;background:#d0d0d0;'></div>
<div class='b' style='left:243px;top:998px;width:720px;height:1px;background:#8a8a8a;'></div>
<div class='b' style='left:0px;top:998px;width:243px;height:1px;background:#b4b4b4;'></div>
<div class='b' style='left:0px;top:999px;width:963px;height:14px;background:#f7f7f7;'></div>
<div class='b' style='left:0px;top:999px;width:2px;height:14px;background:#9fbcc4;'></div>
<div class='b' style='left:27px;top:998px;width:64px;height:15px;background:#a9a9ab;border-top:2px solid #222;'></div>
<div class='b' style='left:27px;top:1000px;width:1px;height:13px;background:#d8d8d8;'></div>
<div class='b' style='left:43px;top:1000px;width:1px;height:13px;background:#d8d8d8;'></div>
<div class='b' style='left:59px;top:1000px;width:1px;height:13px;background:#d8d8d8;'></div>
<div class='b' style='left:75px;top:1000px;width:1px;height:13px;background:#d8d8d8;'></div>
<svg class='b' style='left:31px;top:1002px;' width='56' height='10' viewBox='0 0 56 10'><g fill='#8c8c8e'><rect x='0' y='0.5' width='1.5' height='9'/><path d='M2 5 L8 0.5 V9.5Z'/><path d='M17 5 L23 0.5 V9.5Z'/><path d='M33 0.5 L39 5 L33 9.5Z'/><path d='M48 0.5 L54 5 L48 9.5Z'/><rect x='54.5' y='0.5' width='1.5' height='9'/></g></svg>
<div class='b' style='left:91px;top:999px;width:57px;height:14px;background:#ffffff;'></div>
<div class='t' style='left:104.50px;top:999.5px;font-size:12px;color:#000;font-weight:700;'>Model</div>
<div class='b' style='left:148px;top:999px;width:109px;height:14px;background:#d6d6d6;border:1px solid #9a9a9a;border-top:none;border-bottom:none;'></div>
<div class='t' style='left:158.00px;top:999.5px;font-size:12px;color:#111;'>Motion Study 1</div>
<div class='b' style='left:0px;top:1013px;width:1919px;height:1px;background:#a0a0a0;'></div>
<div class='b' style='left:0px;top:1014px;width:1919px;height:17px;background:#e6e6e6;'></div>
<div class='t' style='left:1.50px;top:1018px;font-size:12px;color:#111;letter-spacing:-0.643px;'>SOLIDWORKS Premium 2025 SP1.2</div>
<div class='t' style='left:1627.00px;top:1018px;font-size:12px;color:#111;letter-spacing:-0.182px;'>Editing Part</div>
<svg class='b' style='left:1716px;top:1015px;' width='16' height='15' viewBox='0 0 16 15'><path d='M6 1 L11.5 11 H0.5 Z' fill='#f2b400' stroke='#7a5a00' stroke-width='0.8'/><path d='M6 4.5 V8 M6 9 V10' stroke='#222' stroke-width='1.2'/><path d='M9 7 L14 1.5 M11 2 H14 V5' fill='none' stroke='#111' stroke-width='1.4'/><g fill='#1b5a8a'><rect x='1' y='12.5' width='2' height='2.5'/><rect x='4.5' y='12' width='2' height='3'/><rect x='8' y='11.5' width='2' height='3.5'/><rect x='11.5' y='10.5' width='2' height='4.5'/></g></svg>
<div class='t' style='left:1814.50px;top:1018px;font-size:12px;color:#111;letter-spacing:-0.667px;'>MMGS</div>
<svg class='b' style='left:1868px;top:1021px;' width='7' height='5' viewBox='0 0 7 5'><path d='M0.5 4.5 L3.5 0.5 L6.5 4.5Z' fill='#222'/></svg>
<svg class='b' style='left:1900px;top:1015px;' width='19' height='16' viewBox='0 0 19 16'><path d='M1 8 L9 2 L18 6 V11 L10 15 L1 11 Z' fill='#f4f4f4' stroke='#333' stroke-width='1'/><path d='M1 8 L10 12 L18 7 M10 12 V15' fill='none' stroke='#333' stroke-width='0.8'/><path d='M6 6 L12 9' stroke='#333' stroke-width='1.4'/></svg>
<div class='b' style='left:243px;top:139px;width:720px;height:859px;background:#ffffff;'></div>
<div class='b' style='left:242px;top:538px;width:9px;height:39px;background:#f7f7f7;border:1px solid #777;border-left:none;'></div>
<svg class='b' style='left:243px;top:554px;' width='6' height='6' viewBox='0 0 6 6'><circle cx='3' cy='3' r='2.5' fill='#d4d4d4' stroke='#999' stroke-width='0.7'/></svg>
<svg class='b' style='left:439px;top:144px;' width='20' height='20' viewBox='0 0 20 20'><circle cx='12' cy='8' r='6.5' fill='#e8f2fa' stroke='#555' stroke-width='1.2'/><path d='M12 3.5 V5.5 M12 10.5V12.5 M7.5 8H9.5 M14.5 8 H16.5' stroke='#333' stroke-width='1.2'/><path d='M7.5 12.5 L2 18' stroke='#3a8fc8' stroke-width='3'/></svg>
<svg class='b' style='left:464px;top:144px;' width='20' height='20' viewBox='0 0 20 20'><rect x='8' y='1' width='11' height='11' fill='none' stroke='#333' stroke-dasharray='2 1.5'/><circle cx='10' cy='9' r='6' fill='#e8f2fa' stroke='#555' stroke-width='1.2'/><path d='M6 13 L1.5 18' stroke='#3a8fc8' stroke-width='3'/></svg>
<svg class='b' style='left:491px;top:144px;' width='20' height='20' viewBox='0 0 20 20'><path d='M2 14 L14 3 L18 7 L7 18 Z' fill='#e4e4e4' stroke='#777' stroke-width='1'/><path d='M9 14 H18 M12 11 L9 14 L12 17' fill='none' stroke='#3a8fc8' stroke-width='2'/></svg>
<svg class='b' style='left:517px;top:144px;' width='20' height='20' viewBox='0 0 20 20'><path d='M2 5 Q10 0 18 5 V17 Q10 12 2 17 Z' fill='#d8dde2' stroke='#555' stroke-width='1'/><path d='M2 5 V17 L6 15 V4 Z M14 4 V15 L18 17 V5 Z' fill='#4a8fc0' stroke='#333' stroke-width='0.8'/></svg>
<svg class='b' style='left:544px;top:144px;' width='20' height='20' viewBox='0 0 20 20'><path d='M1 6 L6 1 H19 V14 L14 19 H1 Z' fill='#fff' stroke='#555' stroke-width='1'/><rect x='1' y='6' width='13' height='13' fill='#7ec0e8' stroke='#333' stroke-width='1'/><path d='M14 6 L19 1' stroke='#555'/></svg>
<svg class='b' style='left:584px;top:144px;' width='20' height='20' viewBox='0 0 20 20'><path d='M2 4 L10 1 L18 4 V16 L10 19 L2 16 Z' fill='#dbe8f0' stroke='#555' stroke-width='1'/><path d='M2 4 L10 7 L18 4 M10 7 V19' fill='none' stroke='#555' stroke-width='0.8'/><path d='M2 4 L10 7 V19 L2 16 Z' fill='#7ab8dc'/></svg>
<svg class='b' style='left:623px;top:144px;' width='20' height='20' viewBox='0 0 20 20'><ellipse cx='10' cy='10' rx='9' ry='6' fill='#e0e0e0' stroke='#aaa'/><circle cx='10' cy='10' r='4' fill='#666'/><path d='M10 1 V19' stroke='#444' stroke-width='1.2'/></svg>
<svg class='b' style='left:663px;top:144px;' width='20' height='20' viewBox='0 0 20 20'><circle cx='9' cy='9' r='8' fill='#3c9b3c'/><path d='M9 1 A8 8 0 0 0 1 9 H9Z' fill='#2f7ad0'/><path d='M9 1 A8 8 0 0 1 17 9 H9Z' fill='#e03a2a'/><path d='M17 9 A8 8 0 0 1 9 17 V9Z' fill='#f2c400'/><path d='M11 18 L18 10 L20 12 L13 19 L10 20 Z' fill='#f4d06a' stroke='#555' stroke-width='0.8'/></svg>
<svg class='b' style='left:688px;top:144px;' width='21' height='20' viewBox='0 0 21 20'><circle cx='10' cy='8' r='7.5' fill='#3c9b3c'/><path d='M10 0.5 A7.5 7.5 0 0 0 2.5 8 H10Z' fill='#2f7ad0'/><path d='M10 0.5 A7.5 7.5 0 0 1 17.5 8 H10Z' fill='#e03a2a'/><path d='M17.5 8 A7.5 7.5 0 0 1 10 15.5 V8Z' fill='#f2c400'/><rect x='0.5' y='13' width='20' height='7' fill='#222'/><g fill='#fff'><rect x='3' y='14.5' width='3' height='2'/><rect x='8.5' y='14.5' width='3' height='2'/><rect x='14' y='14.5' width='3' height='2'/></g></svg>
<svg class='b' style='left:729px;top:145px;' width='20' height='18' viewBox='0 0 20 18'><rect x='1' y='1' width='18' height='12' fill='#e8e8e8' stroke='#333' stroke-width='1.2'/><path d='M10 13 V16 M6 17 H14' stroke='#333' stroke-width='1.5'/></svg>
<svg class='b' style='left:570.0px;top:152.5px;' width='5' height='3' viewBox='0 0 5 3'><path d='M0 0 L5 0 L2.5 3 Z' fill='#888'/></svg>
<svg class='b' style='left:610.0px;top:152.5px;' width='5' height='3' viewBox='0 0 5 3'><path d='M0 0 L5 0 L2.5 3 Z' fill='#888'/></svg>
<svg class='b' style='left:650.0px;top:152.5px;' width='5' height='3' viewBox='0 0 5 3'><path d='M0 0 L5 0 L2.5 3 Z' fill='#888'/></svg>
<svg class='b' style='left:716.0px;top:152.5px;' width='5' height='3' viewBox='0 0 5 3'><path d='M0 0 L5 0 L2.5 3 Z' fill='#888'/></svg>
<svg class='b' style='left:756.5px;top:152.5px;' width='5' height='3' viewBox='0 0 5 3'><path d='M0 0 L5 0 L2.5 3 Z' fill='#888'/></svg>
<div class='b' style='left:937px;top:192px;width:26px;height:216px;background:#d5d5d5;border:1px solid #8c8c8c;border-right:none;'></div>
<div class='b' style='left:938px;top:193px;width:25px;height:23px;background:#f7f7f7;'></div>
<div class='b' style='left:938px;top:216px;width:25px;height:1px;background:#9a9a9a;'></div>
<div class='b' style='left:938px;top:240px;width:25px;height:1px;background:#9a9a9a;'></div>
<div class='b' style='left:938px;top:264px;width:25px;height:1px;background:#9a9a9a;'></div>
<div class='b' style='left:938px;top:288px;width:25px;height:1px;background:#9a9a9a;'></div>
<div class='b' style='left:938px;top:312px;width:25px;height:1px;background:#9a9a9a;'></div>
<div class='b' style='left:938px;top:336px;width:25px;height:1px;background:#9a9a9a;'></div>
<div class='b' style='left:938px;top:360px;width:25px;height:1px;background:#9a9a9a;'></div>
<div class='b' style='left:938px;top:384px;width:25px;height:1px;background:#9a9a9a;'></div>
<svg class='b' style='left:940px;top:193px;' width='19' height='20' viewBox='0 0 19 20'><defs><radialGradient id='gc2' cx='0.5' cy='0.25' r='0.55'><stop offset='0' stop-color='#b4dcf2'/><stop offset='0.7' stop-color='#4f8fc0'/><stop offset='1' stop-color='#0d4472' stop-opacity='0'/></radialGradient></defs><circle cx='9.5' cy='10' r='9.3' fill='#0a3560'/><circle cx='9.5' cy='10' r='8' fill='#0f4878'/><ellipse cx='9.5' cy='6' rx='7' ry='5' fill='url(#gc2)'/><path d='M8 7 L12 10 L8 13 Z' fill='none' stroke='#fff' stroke-width='1'/></svg>
<svg class='b' style='left:940px;top:217px;' width='20' height='20' viewBox='0 0 20 20'><rect x='1' y='2.5' width='14' height='11' fill='#fff' stroke='#222'/><rect x='1' y='2.5' width='14' height='2.5' fill='#2a78b8'/><path d='M3 7.5H12M3 10H10' stroke='#2a78b8'/><path d='M4 14 V16 H12' stroke='#222' fill='none'/><path d='M9 12 L14 9.5 L19 11.5 V17 L14 19.5 L9 17 Z' fill='#f3c300' stroke='#7a5e00' stroke-width='0.8'/><path d='M13 10 L17 8 L19.5 9.5 V13 L16 15 L13 13.5Z' fill='#5ab0de' stroke='#134d75' stroke-width='0.7'/></svg>
<svg class='b' style='left:941px;top:241px;' width='18' height='20' viewBox='0 0 18 20'><path d='M2 5 L9 1.5 L16 5 V15 L9 18.5 L2 15 Z' fill='#fff' stroke='#333' stroke-width='1'/><path d='M5 4 V17 M9 6 V18 M13 4 V17' stroke='#333' stroke-width='0.9'/></svg>
<svg class='b' style='left:940px;top:266px;' width='19' height='18' viewBox='0 0 19 18'><path d='M1 3 H7 L9 5 H15 V16 H1 Z' fill='#fff' stroke='#333' stroke-width='1.1'/><path d='M1 16 L4 8 H18 L15 16' fill='#fff' stroke='#333' stroke-width='1.1'/></svg>
<svg class='b' style='left:940px;top:290px;' width='19' height='19' viewBox='0 0 19 19'><rect x='1' y='1' width='17' height='17' fill='#fff' stroke='#333'/><path d='M3 5 H10 V8 H14 V12 M6 12 H16 V15' fill='none' stroke='#e0a800' stroke-width='2.2'/></svg>
<svg class='b' style='left:940px;top:313px;' width='19' height='19' viewBox='0 0 19 19'><circle cx='9.5' cy='9.5' r='8.5' fill='#3c9b3c'/><path d='M9.5 1 A8.5 8.5 0 0 0 1 9.5 H9.5Z' fill='#2f7ad0'/><path d='M9.5 1 A8.5 8.5 0 0 1 18 9.5 H9.5Z' fill='#e03a2a'/><path d='M18 9.5 A8.5 8.5 0 0 1 9.5 18 V9.5Z' fill='#f2c400'/></svg>
<svg class='b' style='left:940px;top:338px;' width='19' height='19' viewBox='0 0 19 19'><rect x='1' y='1.5' width='17' height='16' fill='#fff' stroke='#1d4f74' stroke-width='1.1'/><rect x='1' y='1.5' width='17' height='2.5' fill='#1b6a98'/><g fill='#1b6a98'><rect x='3' y='6' width='3' height='2'/><rect x='3' y='10' width='3' height='2'/><rect x='3' y='14' width='3' height='2'/></g><path d='M7.5 7H16M7.5 11H16M7.5 15H16' stroke='#333'/></svg>
<svg class='b' style='left:940px;top:362px;' width='19' height='19' viewBox='0 0 19 19'><path d='M1.5 9 L9.5 1.5 L17.5 9' fill='none' stroke='#1b6a98' stroke-width='2.2'/><path d='M4 8 V17.5 H15 V8' fill='#fff' stroke='#111' stroke-width='1.2'/><rect x='7.5' y='11' width='4' height='6.5' fill='#fff' stroke='#111'/></svg>
<svg class='b' style='left:940px;top:386px;' width='19' height='20' viewBox='0 0 19 20'><ellipse cx='8' cy='4' rx='6.5' ry='2.5' fill='#fff' stroke='#333'/><path d='M1.5 4 V15 Q8 19 14.5 15 V4' fill='#fff' stroke='#333'/><path d='M1.5 8 Q8 11 14.5 8 M1.5 11.5 Q8 14.5 14.5 11.5' fill='none' stroke='#333'/><path d='M10 13 H18 M15 10 L18 13 L15 16 M18 17 H10' fill='none' stroke='#1b6a98' stroke-width='1.8'/></svg>
<svg class='b' style='left:252px;top:900px;' width='62' height='62' viewBox='0 0 62 62'><g transform='translate(30.7 39.3)'><path d='M0 0 V-15' stroke='#1d6b1d' stroke-width='4.5'/><path d='M0 -23.5 L-5 -16.5 L-2.5 -14 H2.5 L5 -16.5 Z' fill='#2a8a2a'/><path d='M0 -23.5 L-5 -16.5 L-2.5 -14 H0Z' fill='#3fae3f'/><path d='M0 0 L-11.5 6.7' stroke='#2222c0' stroke-width='4.5'/><path d='M-21.5 12.6 L-13.6 2.6 L-8.9 10.6 Z' fill='#3535e0'/><path d='M0 0 L11.5 6.7' stroke='#b01e1e' stroke-width='4.5'/><path d='M21.5 12.6 L13.6 2.6 L8.9 10.6 Z' fill='#d02c2c'/></g><path d='M27.5 6.5 L30.7 10.5 L34 6.5 M30.7 10.5 V14' fill='none' stroke='#2a9a2a' stroke-width='0.9'/><path d='M6.5 49.5 H11.5 L6.5 57.5 H12' fill='none' stroke='#2020ff' stroke-width='0.9'/><path d='M50.5 49.5 L57.5 57.5 M57.5 49.5 L50.5 57.5' fill='none' stroke='#ff2020' stroke-width='0.9'/></svg>
<div class='t' style='left:253.50px;top:981px;font-size:13px;color:#111;font-weight:700;letter-spacing:0.111px;'>*Isometric</div>
<svg class='b' style='left:0;top:0' width='1919' height='1031' viewBox='0 0 1919 1031'>
<defs>
<linearGradient id='gBody' gradientUnits='userSpaceOnUse' x1='690' y1='300' x2='450' y2='760'>
<stop offset='0' stop-color='#b0b5c4'/><stop offset='0.25' stop-color='#a2a7b5'/><stop offset='0.55' stop-color='#8a8f9b'/><stop offset='0.8' stop-color='#6c707a'/><stop offset='1' stop-color='#5a5e67'/></linearGradient>
<linearGradient id='gRim' gradientUnits='userSpaceOnUse' x1='760' y1='355' x2='590' y2='805'>
<stop offset='0' stop-color='#a9aebc'/><stop offset='0.5' stop-color='#9499a6'/><stop offset='1' stop-color='#a7acb9'/></linearGradient>
<linearGradient id='gWall' gradientUnits='userSpaceOnUse' x1='830' y1='420' x2='620' y2='790'>
<stop offset='0' stop-color='#575b65'/><stop offset='0.12' stop-color='#5b5f69'/><stop offset='0.36' stop-color='#70747e'/><stop offset='0.61' stop-color='#8e93a0'/><stop offset='0.95' stop-color='#c0c5d3'/><stop offset='1' stop-color='#c4c8d6'/></linearGradient>
<linearGradient id='gFloor' gradientUnits='userSpaceOnUse' x1='700' y1='390' x2='560' y2='740'>
<stop offset='0' stop-color='#8b909c'/><stop offset='1' stop-color='#858a96'/></linearGradient>
<linearGradient id='gHub' gradientUnits='userSpaceOnUse' x1='705' y1='445' x2='585' y2='690'>
<stop offset='0' stop-color='#b1b6c5'/><stop offset='0.4' stop-color='#a3a8b6'/><stop offset='0.6' stop-color='#8a8f9b'/><stop offset='0.78' stop-color='#676b75'/><stop offset='1' stop-color='#585c65'/></linearGradient>
<linearGradient id='gBore' gradientUnits='userSpaceOnUse' x1='745' y1='512' x2='680' y2='705'>
<stop offset='0' stop-color='#585c66'/><stop offset='0.45' stop-color='#7c818d'/><stop offset='0.85' stop-color='#b3b8c7'/><stop offset='1' stop-color='#abb0be'/></linearGradient>
<clipPath id='cE2'><polygon points='796.6,652.7 772.7,689.0 745.3,721.4 715.5,748.6 684.4,769.6 653.2,783.5 623.1,789.8 595.3,788.4 570.8,779.2 550.5,762.6 535.3,739.2 525.8,709.9 522.3,675.9 524.9,638.5 533.5,599.1 547.9,559.2 567.4,520.3 591.3,484.0 618.7,451.6 648.5,424.4 679.6,403.4 710.8,389.5 740.9,383.2 768.7,384.6 793.2,393.8 813.5,410.4 828.7,433.8 838.2,463.1 841.7,497.1 839.1,534.5 830.5,573.9 816.1,613.8' /></clipPath>
</defs>
<g stroke='#161616' stroke-width='1.3' stroke-linejoin='round'>
<polygon points='387.6,619.4 390.5,577.9 400.1,534.2 416.0,489.9 437.6,446.8 464.1,406.5 494.5,370.6 527.5,340.5 562.0,317.2 596.6,301.8 630.0,294.7 660.9,296.3 688.1,306.6 797.0,371.7 819.3,390.0 836.0,415.8 846.5,448.0 850.4,485.4 847.5,526.6 838.0,570.0 822.2,614.0 800.7,656.8 774.4,696.8 744.3,732.4 711.4,762.4 677.1,785.5 642.8,800.8 609.6,807.8 579.0,806.2 552.0,796.1 441.4,733.8 418.9,715.4 402.1,689.5 391.5,657.1' fill='url(#gBody)'/>
<polygon points='800.7,656.8 774.4,696.8 744.3,732.4 711.4,762.4 677.1,785.5 642.8,800.8 609.6,807.8 579.0,806.2 552.0,796.1 529.7,777.8 513.0,752.0 502.5,719.8 498.6,682.4 501.5,641.2 511.0,597.8 526.8,553.8 548.3,511.0 574.6,471.0 604.7,435.4 637.6,405.4 671.9,382.3 706.2,367.0 739.4,360.0 770.0,361.6 797.0,371.7 819.3,390.0 836.0,415.8 846.5,448.0 850.4,485.4 847.5,526.6 838.0,570.0 822.2,614.0' fill='url(#gRim)'/>
<polygon points='799.9,655.3 774.4,694.0 745.1,728.6 713.3,757.6 680.1,780.0 646.8,794.9 614.6,801.7 584.9,800.1 558.8,790.3 537.2,772.5 521.0,747.6 510.8,716.4 507.0,680.1 509.8,640.1 519.0,598.0 534.3,555.4 555.1,513.9 580.6,475.2 609.9,440.6 641.7,411.6 674.9,389.2 708.2,374.3 740.4,367.5 770.1,369.1 796.2,378.9 817.8,396.7 834.0,421.6 844.2,452.8 848.0,489.1 845.2,529.1 836.0,571.2 820.7,613.8' fill='none' stroke='#b0b5c3' stroke-width='9' stroke-opacity='0.35'/>
<polygon points='799.6,654.2 774.7,692.0 746.2,725.6 715.2,753.9 682.8,775.8 650.3,790.3 619.0,796.9 590.0,795.4 564.5,785.8 543.5,768.5 527.7,744.2 517.8,713.7 514.1,678.4 516.8,639.4 525.8,598.4 540.7,556.9 561.0,516.4 585.9,478.6 614.4,445.0 645.4,416.7 677.8,394.8 710.3,380.3 741.6,373.7 770.6,375.2 796.0,384.8 817.1,402.1 832.9,426.4 842.8,456.9 846.5,492.2 843.8,531.2 834.8,572.2 819.9,613.7' fill='none' stroke='#858a96' stroke-width='3' stroke-opacity='0.45'/>
<polygon points='799.3,653.7 774.6,691.1 746.4,724.5 715.6,752.5 683.6,774.1 651.4,788.5 620.4,795.1 591.7,793.6 566.5,784.1 545.6,766.9 530.0,742.9 520.1,712.7 516.5,677.7 519.2,639.1 528.1,598.5 542.9,557.3 562.9,517.3 587.6,479.9 615.8,446.5 646.6,418.5 678.6,396.9 710.8,382.5 741.8,375.9 770.5,377.4 795.8,386.9 816.6,404.1 832.2,428.1 842.1,458.3 845.7,493.3 843.0,531.9 834.1,572.5 819.3,613.7' fill='#959aa7'/>
<polygon points='796.6,652.7 772.7,689.0 745.3,721.4 715.5,748.6 684.4,769.6 653.2,783.5 623.1,789.8 595.3,788.4 570.8,779.2 550.5,762.6 535.3,739.2 525.8,709.9 522.3,675.9 524.9,638.5 533.5,599.1 547.9,559.2 567.4,520.3 591.3,484.0 618.7,451.6 648.5,424.4 679.6,403.4 710.8,389.5 740.9,383.2 768.7,384.6 793.2,393.8 813.5,410.4 828.7,433.8 838.2,463.1 841.7,497.1 839.1,534.5 830.5,573.9 816.1,613.8' fill='url(#gWall)' stroke='none'/>
<g clip-path='url(#cE2)'>
<polygon points='746.0,624.5 723.2,659.2 697.0,690.2 668.5,716.2 638.7,736.3 608.8,749.6 580.1,755.7 553.4,754.3 530.0,745.5 510.7,729.6 496.1,707.2 487.0,679.3 483.6,646.7 486.1,610.9 494.4,573.2 508.1,535.1 526.8,497.9 549.6,463.2 575.8,432.2 604.3,406.2 634.1,386.1 664.0,372.8 692.7,366.7 719.4,368.1 742.8,376.9 762.1,392.8 776.7,415.2 785.8,443.1 789.2,475.7 786.7,511.5 778.4,549.2 764.7,587.3' fill='url(#gFloor)'/>
</g>
<polygon points='796.6,652.7 772.7,689.0 745.3,721.4 715.5,748.6 684.4,769.6 653.2,783.5 623.1,789.8 595.3,788.4 570.8,779.2 550.5,762.6 535.3,739.2 525.8,709.9 522.3,675.9 524.9,638.5 533.5,599.1 547.9,559.2 567.4,520.3 591.3,484.0 618.7,451.6 648.5,424.4 679.6,403.4 710.8,389.5 740.9,383.2 768.7,384.6 793.2,393.8 813.5,410.4 828.7,433.8 838.2,463.1 841.7,497.1 839.1,534.5 830.5,573.9 816.1,613.8' fill='none'/>
<polygon points='546.7,616.8 548.2,594.9 553.3,571.8 561.7,548.4 573.1,525.6 587.1,504.3 603.2,485.3 620.7,469.4 638.9,457.1 657.2,449.0 674.8,445.2 691.1,446.1 705.5,451.5 776.2,494.5 787.6,503.8 796.0,517.1 801.3,533.8 803.1,553.3 801.4,574.7 796.3,597.3 788.0,620.2 776.7,642.5 763.0,663.5 747.3,682.1 730.3,697.9 712.6,710.0 694.8,718.2 677.8,722.0 662.0,721.3 648.2,716.1 575.1,677.3 563.2,667.6 554.4,653.9 548.8,636.7' fill='url(#gHub)'/>
<polygon points='776.7,642.5 763.0,663.5 747.3,682.1 730.3,697.9 712.6,710.0 694.8,718.2 677.8,722.0 662.0,721.3 648.2,716.1 636.8,706.8 628.4,693.5 623.1,676.8 621.3,657.3 623.0,635.9 628.1,613.3 636.4,590.4 647.7,568.1 661.4,547.1 677.1,528.5 694.1,512.7 711.8,500.6 729.6,492.4 746.6,488.6 762.4,489.3 776.2,494.5 787.6,503.8 796.0,517.1 801.3,533.8 803.1,553.3 801.4,574.7 796.3,597.3 788.0,620.2' fill='#8d929e'/>
<polygon points='767.3,636.9 755.6,654.6 742.2,670.5 727.6,683.8 712.4,694.0 697.1,700.8 682.4,703.9 668.8,703.2 656.8,698.7 646.9,690.6 639.5,679.2 634.8,664.9 633.1,648.2 634.4,629.9 638.6,610.7 645.6,591.1 655.1,572.1 666.8,554.4 680.2,538.5 694.8,525.2 710.0,515.0 725.3,508.2 740.0,505.1 753.6,505.8 765.6,510.3 775.5,518.4 782.9,529.8 787.6,544.1 789.3,560.8 788.0,579.1 783.8,598.3 776.8,617.9' fill='url(#gBore)'/>
</g>
</svg>
<div class='b' style='left:963px;top:116px;width:1px;height:897px;background:#7a7a7a;'></div>
<div class='b' style='left:964px;top:117px;width:955px;height:21px;background:#a9aaae;'></div>
<div class='b' style='left:964px;top:138px;width:955px;height:1px;background:#1a1a1a;'></div>
<div class='b' style='left:964px;top:139px;width:955px;height:874px;background:#f5f5f5;'></div>
<div class='b' style='left:969px;top:139px;width:950px;height:873px;background:#ffffff;'></div>
<div class='b' style='left:969px;top:139px;width:1px;height:873px;background:#e6e6e6;'></div>
<svg class='b' style='left:971px;top:121px;' width='14' height='12' viewBox='0 0 14 12'><path d='M1.5 1.5 L6 6 L1.5 10.5 M7 1.5 L11.5 6 L7 10.5' fill='none' stroke='#111' stroke-width='2.2'/></svg>
<div class='t' style='left:1391.00px;top:121px;font-size:12.5px;color:#111;font-weight:700;letter-spacing:-1.273px;'>3DEXPERIENCE</div>
<svg class='b' style='left:1880px;top:119px;' width='18' height='17' viewBox='0 0 18 17'><path d='M9 1.5 L10.4 1.7 L10.8 3.9 L12.3 4.5 L14.1 3.2 L15.3 4.4 L14 6.2 L14.6 7.7 L16.8 8.1 V9.5 L14.6 9.9 L14 11.4 L15.3 13.2 L14.1 14.4 L12.3 13.1 L10.8 13.7 L10.4 15.9 H7.6 L7.2 13.7 L5.7 13.1 L3.9 14.4 L2.7 13.2 L4 11.4 L3.4 9.9 L1.2 9.5 V8.1 L3.4 7.7 L4 6.2 L2.7 4.4 L3.9 3.2 L5.7 4.5 L7.2 3.9 L7.6 1.7 Z' fill='#e8e8e8' stroke='#222' stroke-width='1.1'/><circle cx='9' cy='8.8' r='2.6' fill='none' stroke='#222' stroke-width='1.1'/></svg>
<svg class='b' style='left:1901px;top:119px;' width='16' height='17' viewBox='0 0 16 17'><path d='M2 15 L6.5 10.5' stroke='#111' stroke-width='1.8'/><path d='M5 8 L9 12 L9.5 9.5 L13.5 6 L15 7 L10 1.5 L9.5 3.5 L7 7.5 Z' fill='#111'/></svg>
<div class='b' style='left:969px;top:139px;width:950px;height:44px;background:#00578a;'></div>
<svg class='b' style='left:975px;top:146px;' width='32' height='31' viewBox='0 0 32 31'><defs><radialGradient id='gc' cx='0.5' cy='0.2' r='0.55'><stop offset='0' stop-color='#a8d2ec'/><stop offset='0.6' stop-color='#5d9cc8'/><stop offset='1' stop-color='#0d4472' stop-opacity='0'/></radialGradient></defs><circle cx='15.5' cy='15.5' r='15.3' fill='#0a3a62'/><circle cx='15.5' cy='15.5' r='13.5' fill='#0e4676'/><ellipse cx='15.5' cy='9' rx='11' ry='8' fill='url(#gc)'/><circle cx='15.5' cy='15.5' r='7' fill='none' stroke='#2d6fa6' stroke-width='1'/><path d='M13 11.5 L19.5 15.5 L13 19.5 Z' fill='none' stroke='#e6f2fa' stroke-width='1.1'/><text x='15.5' y='27.5' font-family='Liberation Sans' font-weight='700' font-size='4.5' fill='#dbe9f3' text-anchor='middle'>V.R</text><text x='5.5' y='17.5' font-family='Liberation Sans' font-weight='700' font-size='4' fill='#dbe9f3' text-anchor='middle'>3D</text><text x='16' y='7.5' font-family='Liberation Sans' font-weight='700' font-size='4' fill='#e8f3fa' text-anchor='middle'>W</text><text x='25.5' y='17.5' font-family='Liberation Sans' font-weight='700' font-size='4' fill='#dbe9f3' text-anchor='middle'>i</text></svg>
<svg class='b' style='left:1015px;top:143px;' width='42' height='37' viewBox='0 0 42 37'><g fill='#fff' stroke='#fff' stroke-width='1.1' stroke-linejoin='round'><path d='M15 5.2 C20 4.4 27 4 27.6 6.5 C28 9.5 22 13.5 16 15.6 C21 12.5 24.5 9.5 24.2 7.5 C23.8 5.8 19 5.4 15 5.2 Z'/><path d='M8 18.5 C13 17 21.5 17 21.8 20.5 C22 25 14 30 4.8 32.5 C7 28 9.5 24 12.8 21 C11 24.5 10 26.5 9.5 28.5 C15 27 19.5 24 19.5 21 C19.5 19 13 18.3 8 18.5 Z'/><path d='M35.8 14.3 C30 13.8 23.5 14 23.5 16 C23.5 18 33.5 22.5 33.8 25.5 C34 28 27 28.8 19.3 28.2 C25 27.5 30 27 30.2 25.5 C30.5 23.5 22.5 19.5 22.5 16.8 C22.5 14.8 29 13.8 35.8 14.3 Z'/></g></svg>
<div class='t' style='left:1066.00px;top:153px;font-size:14.5px;color:#ffffff;-webkit-text-stroke:0.35px #fff;'>ENOVIA</div>
<div class='t' style='left:1131.00px;top:152px;font-size:15.5px;color:#ffffff;letter-spacing:0.212px;'>MySession - P-003108 (Visiativ UK)</div>
<svg class='b' style='left:1388px;top:157px;' width='15' height='9' viewBox='0 0 15 9'><path d='M1.5 1.5 L7.5 7 L13.5 1.5' fill='none' stroke='#fff' stroke-width='2.4'/></svg>
<div class='b' style='left:1614px;top:146px;width:220px;height:30px;background:#ffffff;border-radius:15px;'></div>
<div class='t' style='left:1625.00px;top:152.5px;font-size:15px;color:#a8a8a8;letter-spacing:-0.800px;'>Search</div>
<svg class='b' style='left:1805px;top:151px;' width='20' height='20' viewBox='0 0 20 20'><circle cx='7.5' cy='7.5' r='6.2' fill='none' stroke='#555' stroke-width='1.8'/><path d='M12 12 L18.5 18.5' stroke='#555' stroke-width='2.4'/></svg>
<svg class='b' style='left:1845px;top:152px;' width='22' height='19' viewBox='0 0 22 19'><path d='M2 2 H10 L20 12 L12 18 L2 9 Z' fill='none' stroke='#fff' stroke-width='2.2' stroke-linejoin='round'/><circle cx='6.5' cy='6' r='1.6' fill='#fff'/></svg>
<svg class='b' style='left:1890px;top:152px;' width='20' height='19' viewBox='0 0 20 19'><path d='M1 2.5 H19 M1 9.5 H19 M1 16.5 H19' stroke='#fff' stroke-width='2.6'/></svg>
<div class='b' style='left:969px;top:183px;width:950px;height:2px;background:#ffffff;'></div>
<div class='b' style='left:971px;top:185px;width:948px;height:30px;background:#f0f0f0;'></div>
<div class='b' style='left:971px;top:214px;width:948px;height:1px;background:#e4e4e4;'></div>
<div class='b' style='left:1010px;top:186px;width:1px;height:28px;background:#e0e0e0;'></div>
<div class='b' style='left:1210px;top:186px;width:1px;height:28px;background:#e0e0e0;'></div>
<div class='b' style='left:1270px;top:186px;width:1px;height:28px;background:#e0e0e0;'></div>
<div class='b' style='left:1310px;top:186px;width:1px;height:28px;background:#e0e0e0;'></div>
<div class='b' style='left:1350px;top:186px;width:1px;height:28px;background:#e0e0e0;'></div>
<div class='b' style='left:1386px;top:186px;width:1px;height:28px;background:#e0e0e0;'></div>
<div class='b' style='left:1486px;top:186px;width:1px;height:28px;background:#e0e0e0;'></div>
<div class='b' style='left:1626px;top:186px;width:1px;height:28px;background:#e0e0e0;'></div>
<div class='b' style='left:1751px;top:186px;width:1px;height:28px;background:#e0e0e0;'></div>
<div class='b' style='left:1851px;top:186px;width:1px;height:28px;background:#e0e0e0;'></div>
<div class='b' style='left:982px;top:193px;width:14px;height:14px;background:#f4f4f4;border:1px solid #9a9a9a;border-radius:2px;'></div>
<div class='t' style='left:1016.00px;top:192px;font-size:14px;color:#555;letter-spacing:-0.077px;'>Component Name</div>
<div class='t' style='left:1216.00px;top:192px;font-size:14px;color:#555;letter-spacing:-0.200px;'>Status</div>
<div class='t' style='left:1316.00px;top:192px;font-size:14px;color:#555;letter-spacing:-0.250px;'>Rev</div>
<div class='t' style='left:1356.00px;top:192px;font-size:14px;color:#555;'>Is...</div>
<div class='t' style='left:1392.00px;top:192px;font-size:14px;color:#555;letter-spacing:-0.077px;'>Maturity State</div>
<div class='t' style='left:1492.50px;top:192px;font-size:14px;color:#555;letter-spacing:-0.100px;'>Description</div>
<div class='t' style='left:1632.00px;top:192px;font-size:14px;color:#555;letter-spacing:-0.125px;'>File Name</div>
<div class='t' style='left:1757.00px;top:192px;font-size:14px;color:#555;letter-spacing:0.107px;'>Collaborativ...</div>
<div class='t' style='left:1857.00px;top:192px;font-size:14px;color:#555;letter-spacing:-0.333px;'>Name</div>
<div class='b' style='left:971px;top:240px;width:948px;height:1px;background:#ececec;'></div>
<div class='b' style='left:982px;top:221px;width:14px;height:14px;background:#f4f4f4;border:1px solid #9a9a9a;border-radius:2px;'></div>
<svg class='b' style='left:1049px;top:218px;' width='22' height='22' viewBox='0 0 22 22'><path d='M2 5 L8 1.5 L13 4 V10 L20 8 V17 L12 21 L2 16 Z' fill='#5ab0de' stroke='#134d75' stroke-width='1.3' stroke-linejoin='round'/><path d='M2 5 L8 8 L13 5.5 M8 8 V14 L20 8.5 M8 14 L12 16 V21 M12 16 L20 12' fill='none' stroke='#134d75' stroke-width='1.1'/></svg>
<div class='t' style='left:1082.00px;top:220px;font-size:13.5px;color:#333;letter-spacing:-0.625px;'>wheel</div>
<svg class='b' style='left:1230px;top:218px;' width='22' height='22' viewBox='0 0 22 22'><path d='M3 4 Q3 2 5 2 H15 Q17 2 17 4 V7 H3 Z' fill='#b8b8b8'/><rect x='1' y='7' width='18' height='8' rx='1.5' fill='#c4c4c4'/><rect x='9' y='10' width='12' height='11' fill='#e8780a'/><rect x='12' y='10' width='6' height='4' fill='#fff'/><rect x='15.5' y='10.8' width='1.5' height='2.4' fill='#e8780a'/><rect x='11' y='16' width='8' height='1.2' fill='#fff'/><rect x='11' y='18.2' width='8' height='1.2' fill='#fff'/></svg>
<svg class='b' style='left:1279px;top:216px;' width='23' height='21' viewBox='0 0 23 21'><circle cx='16' cy='6.5' r='6' fill='#4bb04b'/><circle cx='17' cy='5' r='1.3' fill='#fff'/><path d='M12 10 L1.5 19.5 L4 20 L6 18 L7 19 L9 17 L8 16 L14.5 11' fill='#4bb04b' stroke='#4bb04b' stroke-width='1.8' stroke-linejoin='round'/></svg>
<div class='t' style='left:1327.00px;top:220px;font-size:13.5px;color:#333;'>A</div>
<svg class='b' style='left:1355px;top:222px;' width='14' height='11' viewBox='0 0 14 11'><path d='M1.5 5.5 L5 9 L12.5 1.5' fill='none' stroke='#4bb04b' stroke-width='2.2'/></svg>
<div class='t' style='left:1392.00px;top:220px;font-size:13.5px;color:#333;letter-spacing:-0.667px;'>In Work</div>
<div class='t' style='left:1492.50px;top:220px;font-size:13.5px;color:#333;letter-spacing:-0.393px;'>WHEEL - TAPERED</div>
<div class='t' style='left:1633.00px;top:220px;font-size:13.5px;color:#333;letter-spacing:-0.545px;'>wheel.SLDPRT</div>
<div class='t' style='left:1757.00px;top:220px;font-size:13.5px;color:#333;letter-spacing:-0.429px;'>P-003108</div>
<div class='t' style='left:1857.00px;top:220px;font-size:13.5px;color:#333;letter-spacing:0.571px;'>PP000242</div>
<svg class='b' style='left:1235px;top:248px;' width='70' height='125' viewBox='0 0 70 125'><path d='M55.8 118.8 L17.5 19' stroke='#e41b1b' stroke-width='4'/><path d='M11.8 2.6 L8.2 24 L28.3 16.8 Z' fill='#e41b1b'/></svg>
<svg class='b' style='left:972px;top:859px;' width='50' height='50' viewBox='0 0 50 50'><defs><radialGradient id='gsh'><stop offset='0.8' stop-color='#000' stop-opacity='0.12'/><stop offset='1' stop-color='#000' stop-opacity='0'/></radialGradient></defs><circle cx='25' cy='25' r='24' fill='url(#gsh)'/><circle cx='25' cy='24.5' r='21' fill='#fff' stroke='#e4e4e4'/><path d='M13 28 Q13 17 24 17 Q32 17 34 26 L37 28.5 Q25 29.5 13 29 Z' fill='#e8e8e8' stroke='#333' stroke-width='1.1'/><path d='M13 28.5 L16 30 H25' fill='none' stroke='#333' stroke-width='0.9'/><g fill='#333'><circle cx='20' cy='23' r='0.8'/><circle cx='23' cy='23' r='0.8'/><circle cx='26' cy='23' r='0.8'/></g></svg>
<div class='b' style='left:970px;top:995px;width:949px;height:17px;background:#f0f0f0;'></div>
<svg class='b' style='left:976px;top:999px;' width='6' height='9' viewBox='0 0 6 9'><path d='M5 0.5 L1 4.5 L5 8.5Z' fill='#888'/></svg>
<div class='b' style='left:988px;top:997px;width:732px;height:13px;background:#c2c2c2;'></div>
<svg class='b' style='left:1909px;top:999px;' width='6' height='9' viewBox='0 0 6 9'><path d='M1 0.5 L5 4.5 L1 8.5Z' fill='#222'/></svg>
<div class='b' style='left:963px;top:1012px;width:956px;height:1px;background:#1e1e1e;'></div>
<div class='b' style='left:1250px;top:940px;width:367px;height:24px;background:#e4e4e4;border:1px solid #b4b4b4;border-bottom:none;box-shadow:0 -1px 2px rgba(0,0,0,0.1);'></div>
<div class='b' style='left:1252px;top:942px;width:67px;height:21px;background:#a8cae6;'></div>
<div class='t' style='left:1262.50px;top:946px;font-size:12.5px;color:#333;letter-spacing:-0.438px;'>Lifecycle</div>
<div class='t' style='left:1329.50px;top:946px;font-size:12.5px;color:#444;letter-spacing:-0.375px;'>Collaboration</div>
<div class='t' style='left:1420.00px;top:946px;font-size:12.5px;color:#444;letter-spacing:-0.333px;'>Simulation</div>
<div class='t' style='left:1505.50px;top:946px;font-size:12.5px;color:#444;letter-spacing:-0.833px;'>View</div>
<div class='t' style='left:1569.00px;top:946px;font-size:12.5px;color:#444;letter-spacing:-0.750px;'>Tools</div>
<svg class='b' style='left:1619px;top:944px;' width='20' height='14' viewBox='0 0 20 14'><path d='M2 4 Q2 1 5 1 Q8 1 10 4 Q12 1 15 1 Q18 1 18 4 L10 12.5 Z' fill='none' stroke='#c8c8c8' stroke-width='1.6'/></svg>
<div class='b' style='left:1241px;top:963px;width:409px;height:50px;background:#e6e6e6;border:1px solid #c2c2c2;border-bottom:none;'></div>
<div class='b' style='left:1242px;top:964px;width:54px;height:49px;background:#ffffff;'></div>
<div class='b' style='left:1296px;top:964px;width:1px;height:49px;background:#bdbdbd;'></div>
<div class='b' style='left:1280px;top:970px;width:1px;height:40px;background:#d8d8d8;'></div>
<svg class='b' style='left:1248px;top:973px;' width='36' height='30' viewBox='0 0 36 30'><g transform='translate(1 1)'><path d='M0 3 V14 Q7 17.5 14 14 V3' fill='#b8b8b8' stroke='#555' stroke-width='0.9'/><ellipse cx='7' cy='3' rx='7' ry='2.6' fill='#e8e8e8' stroke='#555' stroke-width='0.9'/><path d='M0 7 Q7 10.5 14 7 M0 10.5 Q7 14 14 10.5' fill='none' stroke='#555' stroke-width='0.8'/></g><g transform='translate(6 5)'><path d='M0 3 V14 Q7 17.5 14 14 V3' fill='#b8b8b8' stroke='#555' stroke-width='0.9'/><ellipse cx='7' cy='3' rx='7' ry='2.6' fill='#e8e8e8' stroke='#555' stroke-width='0.9'/><path d='M0 7 Q7 10.5 14 7 M0 10.5 Q7 14 14 10.5' fill='none' stroke='#555' stroke-width='0.8'/></g><g transform='translate(11 10)'><path d='M0 3 V14 Q7 17.5 14 14 V3' fill='#b8b8b8' stroke='#555' stroke-width='0.9'/><ellipse cx='7' cy='3' rx='7' ry='2.6' fill='#e8e8e8' stroke='#555' stroke-width='0.9'/><path d='M0 7 Q7 10.5 14 7 M0 10.5 Q7 14 14 10.5' fill='none' stroke='#555' stroke-width='0.8'/></g><path d='M22 29 V21 H19 L24.5 15 L30 21 H27 V29 Z' fill='#2a86c0' stroke='#134d75' stroke-width='0.8'/></svg>
<svg class='b' style='left:1281px;top:986px;' width='7' height='5' viewBox='0 0 7 5'><path d='M0.5 0.5 H6.5 L3.5 4.5Z' fill='#111'/></svg>
<svg class='b' style='left:1302px;top:973px;' width='32' height='30' viewBox='0 0 32 30'><g transform='translate(1 2)'><path d='M0 3 V14 Q7 17.5 14 14 V3' fill='#d0d0d0' stroke='#999' stroke-width='0.9'/><ellipse cx='7' cy='3' rx='7' ry='2.6' fill='#e8e8e8' stroke='#999' stroke-width='0.9'/><path d='M0 7 Q7 10.5 14 7 M0 10.5 Q7 14 14 10.5' fill='none' stroke='#999' stroke-width='0.8'/></g><path d='M27 20 A6 6 0 1 1 21 15' fill='none' stroke='#bdbdbd' stroke-width='2.5'/></svg>
<svg class='b' style='left:1344px;top:973px;' width='36' height='30' viewBox='0 0 36 30'><path d='M3 12 H14 Q18 6 26 6 M22 2 L27 6 L22 10' fill='none' stroke='#b8b8b8' stroke-width='2.5'/><circle cx='19' cy='17' r='6.5' fill='none' stroke='#a8a8a8' stroke-width='2.8'/><path d='M23.5 21.5 L29 27' stroke='#a8a8a8' stroke-width='3.2'/></svg>
<svg class='b' style='left:1378px;top:986px;' width='7' height='5' viewBox='0 0 7 5'><path d='M0.5 0.5 H6.5 L3.5 4.5Z' fill='#111'/></svg>
<div class='b' style='left:1377px;top:970px;width:1px;height:40px;background:#d0d0d0;'></div>
<svg class='b' style='left:1397px;top:973px;' width='34' height='32' viewBox='0 0 34 32'><path d='M5 11 A12 11 0 0 1 28 9 M29 20 A12 11 0 0 1 6 22' fill='none' stroke='#bdbdbd' stroke-width='2'/><path d='M3 13 L7 17 L3 21 H7 L11 17 L7 13 Z M11 13 L15 17 L11 21 H15 L19 17 L15 13Z M19 13 L23 17 L19 21 H23 L27 17 L23 13Z' fill='#d4d4d4' stroke='#b0b0b0' stroke-width='0.8'/></svg>
<svg class='b' style='left:1441px;top:973px;' width='32' height='30' viewBox='0 0 32 30'><g fill='none' stroke='#a8a8a8' stroke-width='2.2'><circle cx='4' cy='3' r='2'/><circle cx='4' cy='26' r='2'/><path d='M4 5 V24 M4 15 Q10 15 10 11'/><circle cx='10' cy='9' r='2'/><path d='M15 4 H28 M15 11 H28 M15 18 H28 M15 25 H28'/></g></svg>
<svg class='b' style='left:1483px;top:973px;' width='32' height='30' viewBox='0 0 32 30'><g fill='none' stroke='#a8a8a8' stroke-width='2.2'><circle cx='5' cy='3' r='2'/><circle cx='5' cy='26' r='2'/><path d='M5 5 V24'/></g><path d='M19 18 H23 V14 H27 V18 H31 V22 H27 V26 H23 V22 H19 Z' fill='#c8c8c8' stroke='#a8a8a8'/></svg>
<svg class='b' style='left:1525px;top:973px;' width='32' height='30' viewBox='0 0 32 30'><g fill='none' stroke='#a8a8a8' stroke-width='2.2'><circle cx='4' cy='3' r='2'/><circle cx='4' cy='26' r='2'/><path d='M4 5 V24 M4 14 H15'/><circle cx='17' cy='26' r='2'/><path d='M17 24 V17'/></g><path d='M19 6 H23 V2 H27 V6 H31 V10 H27 V14 H23 V10 H19 Z' fill='#c8c8c8' stroke='#a8a8a8'/></svg>
<svg class='b' style='left:1567px;top:973px;' width='32' height='30' viewBox='0 0 32 30'><g fill='none' stroke='#a8a8a8' stroke-width='2.2'><circle cx='4' cy='3' r='2'/><circle cx='4' cy='26' r='2'/><path d='M4 5 V24 M4 14 H15'/><circle cx='17' cy='3' r='2'/><path d='M17 5 V12'/></g><path d='M19 19 H23 V15 H27 V19 H31 V23 H27 V27 H23 V23 H19 Z' fill='#c8c8c8' stroke='#a8a8a8'/></svg>
<svg class='b' style='left:1610px;top:973px;' width='34' height='32' viewBox='0 0 34 32'><g transform='translate(1 2)'><path d='M0 3 V14 Q7 17.5 14 14 V3' fill='#c8c8c8' stroke='#888' stroke-width='0.9'/><ellipse cx='7' cy='3' rx='7' ry='2.6' fill='#e8e8e8' stroke='#888' stroke-width='0.9'/><path d='M0 7 Q7 10.5 14 7 M0 10.5 Q7 14 14 10.5' fill='none' stroke='#888' stroke-width='0.8'/></g><circle cx='22' cy='20' r='8' fill='#e8e8e8' stroke='#999' stroke-width='1.6'/><path d='M22 15 V20 H26' fill='none' stroke='#777' stroke-width='1.2'/></svg>
</body></html>
